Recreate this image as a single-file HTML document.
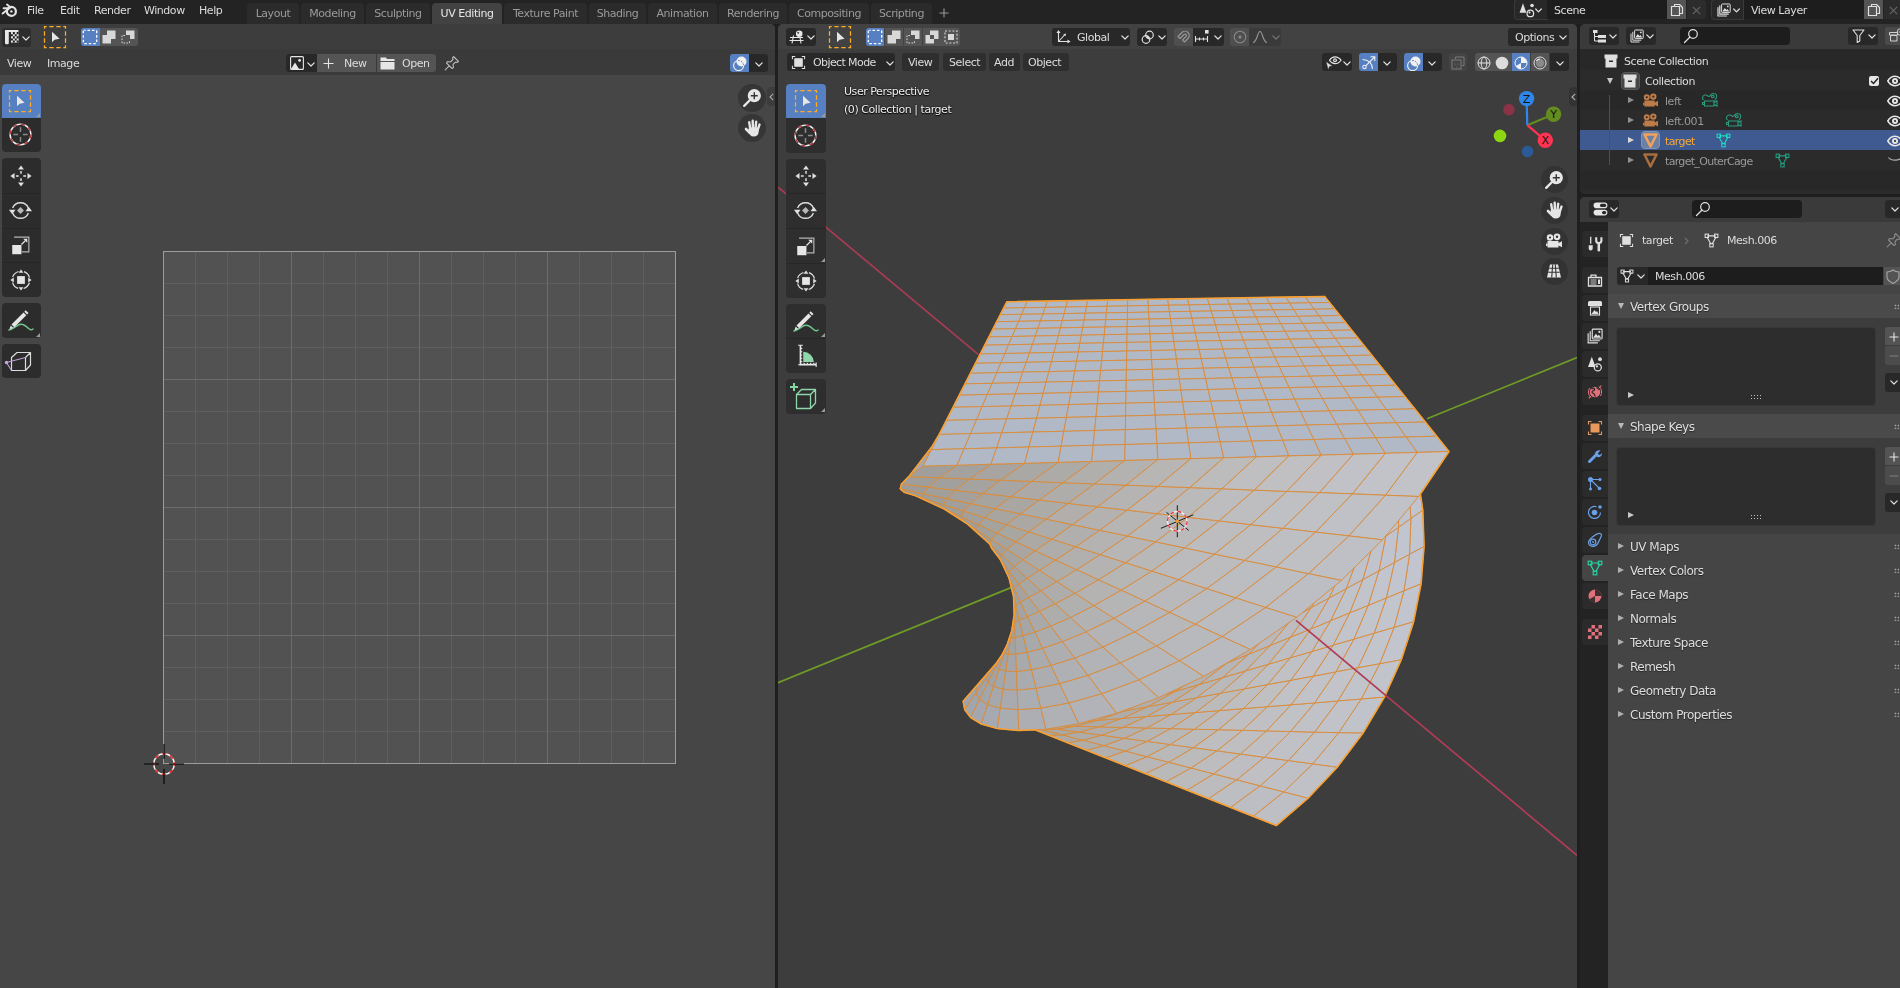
<!DOCTYPE html>
<html lang="en">
<head>
<meta charset="utf-8">
<title>Blender</title>
<style>
*{box-sizing:border-box}
html,body{margin:0;padding:0}
body{width:1900px;height:988px;overflow:hidden;background:#1f1f1f;position:relative;
 font-family:"DejaVu Sans","Liberation Sans",sans-serif;font-size:11px;letter-spacing:-0.45px;color:#dcdcdc;line-height:14px;-webkit-font-smoothing:antialiased}
.a{position:absolute}
.t{position:absolute;white-space:nowrap;line-height:14px;height:14px;will-change:transform;margin-top:1px}
.area{position:absolute;overflow:hidden;border-radius:5px}
.btn{position:absolute;background:#282828;border-radius:3px}
.g{background:#545454}
.b{background:#5680c2}
.k{background:#1d1d1d}
svg{position:absolute;overflow:visible}
.i{fill:none;stroke:#e0e0e0;stroke-width:1.2;stroke-linecap:round;stroke-linejoin:round}
.f{fill:#e0e0e0;stroke:none}
.dd{position:absolute;width:7px;height:5px}
.tab{will-change:transform;position:absolute;top:3px;height:21px;background:#2b2b2b;border-radius:4px 4px 0 0;color:#9a9a9a;text-align:center;line-height:22px}
.tool{position:absolute;width:37px;background:#2c2c2c}
.ph{position:absolute;left:0;right:0;height:24px}
.pt{will-change:transform;margin-top:1px;position:absolute;left:22px;font-size:12px;letter-spacing:-0.5px;color:#dedede;white-space:nowrap;line-height:16px;text-shadow:0 1px 1px rgba(0,0,0,.5)}
.tri{position:absolute;width:0;height:0}
.grip{position:absolute;width:5px;height:5px;background:
 radial-gradient(circle,#a0a0a0 0.8px,transparent 1.1px) 0 0/3px 3px}
</style>
</head>
<body>
<svg width="0" height="0" style="position:absolute"><defs>
<symbol id="chev" viewBox="0 0 8 5"><path d="M.8.8 4 4 7.2.8" fill="none" stroke="#e0e0e0" stroke-width="1.2" stroke-linecap="round" stroke-linejoin="round"/></symbol>
<symbol id="tsel" viewBox="0 0 24 24"><rect x="1.500" y="1.500" width="21" height="21" fill="none" stroke="#ffad24" stroke-width="1.250" stroke-dasharray="4.300 2.700" stroke-dashoffset="2.150"/><path d="M9 6.800V17.200L11.600 14.700 16.600 13.800z" fill="#e6e6e6"/></symbol>
<symbol id="tcur" viewBox="0 0 26 26"><circle cx="13" cy="13" r="10.8" fill="none" stroke="#f0f0f0" stroke-width="1.5"/><circle cx="13" cy="13" r="10.8" fill="none" stroke="#b4383f" stroke-width="1.5" stroke-dasharray="4.24 4.24"/><path d="M13 5.5v5M13 15.5v5M5.5 13h5M15.5 13h5" stroke="#8a8a8a" stroke-width="1.6" fill="none"/></symbol>
<symbol id="tmove" viewBox="0 0 26 26"><path d="M13 1.5 16.2 6h-6.4zM13 24.5 16.2 20h-6.4zM1.5 13 6 9.8v6.4zM24.5 13 20 9.8v6.4z" fill="#e0e0e0"/><path d="M13 7.5v3M13 15.5v3M7.500 13h3M15.5 13h3" stroke="#e0e0e0" stroke-width="1.6" fill="none"/></symbol>
<symbol id="trot" viewBox="0 0 26 26"><path d="M4.800 10.500A8.800 8.800 0 0 1 21.2 10.500M21.200 15.500A8.800 8.800 0 0 1 4.800 15.500" fill="none" stroke="#e0e0e0" stroke-width="1.4"/><path d="M1 12.200h6.800L4.400 16.800zM18.200 13.800H25L21.600 9.200z" fill="#e0e0e0"/><path d="M13 9.400 16.600 13 13 16.600 9.400 13z" fill="#b8b8b8"/></symbol>
<symbol id="tscl" viewBox="0 0 26 26"><path d="M5.500 4.500H21.500V20.500H14" fill="none" stroke="#b4b4b4" stroke-width="1.3"/><rect x="3.5" y="13" width="10" height="10" fill="#e6e6e6"/><path d="M13.500 12.500 18 8" stroke="#e6e6e6" stroke-width="1.4"/><path d="M19.800 6.200v4.400l-4.400-4.400z" fill="#e6e6e6"/></symbol>
<symbol id="ttrf" viewBox="0 0 26 26"><circle cx="13" cy="13" r="9.600" fill="none" stroke="#e0e0e0" stroke-width="1.300" stroke-dasharray="9 6.080" stroke-dashoffset="-3.040"/><rect x="8.800" y="8.800" width="8.400" height="8.400" fill="#e6e6e6"/><path d="M13 1.500 15.600 5.200h-5.200zM13 24.500 15.600 20.800h-5.200zM1.500 13 5.200 10.400v5.200zM24.500 13 20.800 10.400v5.200z" fill="#e0e0e0"/></symbol>
<symbol id="tann" viewBox="0 0 30 26"><path d="M3 22c4-1 7-4 10.500-5.500s6 1 8.500 3.500 4 2 5 1" fill="none" stroke="#72c78e" stroke-width="1.5" stroke-linecap="round"/><path d="M5.500 16.500 17.500 4.500 20.300 7.300 8.300 19.300z" fill="#e6e6e6"/><path d="M18.300 3.700 19.700 2.300 22.500 5.100 21.100 6.500z" fill="#e6e6e6"/><path d="M3.500 21.300 4.700 17.500 7.300 20.100z" fill="#e6e6e6"/></symbol>
<symbol id="trip" viewBox="0 0 30 26"><path d="M7.500 9.500 13 4.500H26.500V17L21.500 22.500H7.500zM21.500 9.500V22.500M21.500 9.500 26.500 4.500" fill="none" stroke="#dcdcdc" stroke-width="1.2" stroke-linejoin="round"/><path d="M2.500 14.500 21.500 9.500M2.500 14.500 7.500 22.500" fill="none" stroke="#bf9fd8" stroke-width="1.100"/><circle cx="2.500" cy="14.500" r="1.700" fill="#c9a4e8"/></symbol>
<symbol id="tmeas" viewBox="0 0 26 26"><path d="M7 2.500V23.500H24" fill="none" stroke="#e6e6e6" stroke-width="1.800"/><path d="M4.500 2.500H9.500M4.500 23.500H7M7 6h2M7 9.500h2M7 13h2M7 16.500h2M7 20h2M11 23.500v-2M14.500 23.500v-2M18 23.500v-2M21.500 23.500v-2M24 21v5" stroke="#e6e6e6" stroke-width="1.200" fill="none"/><path d="M10 20.500V9.500A11.500 11.500 0 0 1 21.500 20.500z" fill="#8fd6aa"/></symbol>
<symbol id="tadd" viewBox="0 0 30 30"><path d="M7.500 12.500 12.500 7.500H26.500V21L21.500 26.500H7.500zM7.500 12.500H21.500V26.500M21.500 12.500 26.500 7.500" fill="none" stroke="#8fd6aa" stroke-width="1.300" stroke-linejoin="round"/><path d="M5 1v8M1 5h8" stroke="#7ed99f" stroke-width="2" fill="none"/></symbol>
<symbol id="corner" viewBox="0 0 4 4"><path d="M4 0V4H0z" fill="#9a9a9a"/></symbol>
<symbol id="gzoom" viewBox="0 0 20 20"><circle cx="12.300" cy="7.700" r="6.600" fill="#e6e6e6"/><path d="M7.500 12.500 2.200 17.800" stroke="#e6e6e6" stroke-width="2.400" stroke-linecap="round"/><path d="M12.300 4.200v7M8.800 7.700h7" stroke="#333" stroke-width="1.400"/></symbol>
<symbol id="ghand" viewBox="0 0 20 20"><g stroke="#e6e6e6" stroke-width="2.400" stroke-linecap="round" fill="none"><path d="M7.300 11 6.200 4.200M9.900 10.500 9.700 2.600M12.400 10.800 13.200 3.600M14.600 12 16.500 6.600"/><path d="M6.500 14.500 3 11" stroke-width="2.600"/></g><path d="M6 9.500H15.700V13.500C15.700 16.800 13.700 18.600 10.700 18.600 7.800 18.600 6 16.300 5 13.500z" fill="#e6e6e6"/></symbol>
<symbol id="imesh" viewBox="0 0 16 16"><path d="M3.500 3h9M3 4 7.500 12M13 4 8.500 12" fill="none" stroke-width="1.200"/><rect x="1.200" y="1.200" width="3.600" height="3.600" fill="none" stroke-width="1.100"/><rect x="11.200" y="1.200" width="3.600" height="3.600" fill="none" stroke-width="1.100"/><rect x="6.200" y="11.200" width="3.600" height="3.600" fill="none" stroke-width="1.100"/></symbol>
<symbol id="icam" viewBox="0 0 18 16"><path fill-rule="evenodd" d="M5 1.300a3.200 3.200 0 1 0 0 6.400 3.200 3.200 0 1 0 0-6.400zM5 3.400a1.100 1.100 0 1 1 0 2.200 1.100 1.100 0 1 1 0-2.200zM12 .400a3.400 3.400 0 1 0 0 6.800 3.400 3.400 0 1 0 0-6.800zM12 2.600a1.200 1.200 0 1 1 0 2.400 1.200 1.200 0 1 1 0-2.400z"/><path d="M2.500 8h11v6.500h-11zM13.500 10 17 8.300v6l-3.500-1.800z"/><path d="M1 10.500h1.500v2.500H1z"/></symbol>
<symbol id="ieye" viewBox="0 0 16 12"><path d="M.800 6C3 2.400 5.500 1.300 8 1.300S13 2.400 15.200 6C13 9.600 10.500 10.700 8 10.700S3 9.600.800 6z" fill="none" stroke="#e6e6e6" stroke-width="1.500"/><circle cx="8" cy="6" r="3" fill="#e6e6e6"/><circle cx="8" cy="6" r="1.100" fill="#2b2b2b"/></symbol>
<symbol id="ibox" viewBox="0 0 16 16"><path d="M1.500 1.500h13v4h-13zM2.500 5.500h11v9h-11z" fill="#e0e0e0"/><path d="M6 8.200h4" stroke="#2a2a2a" stroke-width="1.400"/></symbol>
<symbol id="iobj" viewBox="0 0 16 16"><rect x="4" y="4" width="8" height="8"/><path d="M1.500 4.500v-3h3M11.500 1.500h3v3M14.500 11.500v3h-3M4.500 14.500h-3v-3" fill="none" stroke-width="1.100"/></symbol>
<symbol id="ipin" viewBox="0 0 16 16"><path d="M9.500 1.500 14.500 6.500 13 7.500 11.500 7 9 9.500 9.500 12.500 8 13.500 2.500 8 3.500 6.500 6.500 7 9 4.500 8.500 3zM5.200 10.800 1.200 14.800" fill="none" stroke-width="1.100" stroke-linejoin="round" stroke-linecap="round"/></symbol>
<symbol id="isearch" viewBox="0 0 16 16"><circle cx="10" cy="6" r="4.300" fill="none" stroke="#e0e0e0" stroke-width="1.200"/><path d="M7 9 1.500 14.500" stroke="#e0e0e0" stroke-width="1.300" stroke-linecap="round"/></symbol>
<symbol id="iimgs" viewBox="0 0 14 14"><path d="M1 4.500V13H9.500M2.800 2.800V11.200H11.200" fill="none" stroke="#e0e0e0" stroke-width="1"/><rect x="4.600" y="1" width="8.600" height="8.600" rx=".8" fill="none" stroke="#e0e0e0" stroke-width="1"/><path d="M5.300 8.600 7.800 5 9.400 7 10.400 6 12.400 8.600z" fill="#e0e0e0"/><circle cx="10.800" cy="3.400" r=".9" fill="#e0e0e0"/></symbol>
<symbol id="iover" viewBox="0 0 16 16"><circle cx="9.500" cy="6.500" r="5" fill="#f0f0f0"/><path d="M6 5.600A5 5 0 1 0 11.600 11" fill="none" stroke="#f0f0f0" stroke-width="1.200"/><path d="M6 5.600A5 5 0 0 1 11.600 11" fill="none" stroke="#5680c2" stroke-width="1" stroke-dasharray="1.800 1.200"/></symbol>
</defs></svg>
<!-- TOP BAR -->
<div class="a" style="left:0;top:0;width:1900px;height:24px;background:#232323"></div>
<svg style="left:1px;top:3px" width="17" height="15" viewBox="0 0 17 15"><g fill="none" stroke="#e4e4e4" stroke-linecap="round"><circle cx="10.4" cy="8.4" r="4.5" stroke-width="2.2"/><path d="M1.6 10.6 8 5.4M2.6 5.2H8.4M6 1.6 9.6 4.4" stroke-width="1.9"/></g><circle cx="10.4" cy="8.4" r="1.2" fill="#e4e4e4"/></svg>
<div class="t" style="left:27px;top:3px">File</div>
<div class="t" style="left:60px;top:3px">Edit</div>
<div class="t" style="left:94px;top:3px">Render</div>
<div class="t" style="left:144px;top:3px">Window</div>
<div class="t" style="left:199px;top:3px">Help</div>
<div class="tab" style="left:247px;width:52px">Layout</div>
<div class="tab" style="left:301px;width:63px">Modeling</div>
<div class="tab" style="left:366px;width:64px">Sculpting</div>
<div class="tab" style="left:432px;width:70px;background:#424242;color:#e6e6e6">UV Editing</div>
<div class="tab" style="left:504px;width:83px">Texture Paint</div>
<div class="tab" style="left:589px;width:57px">Shading</div>
<div class="tab" style="left:648px;width:69px">Animation</div>
<div class="tab" style="left:719px;width:68px">Rendering</div>
<div class="tab" style="left:789px;width:80px">Compositing</div>
<div class="tab" style="left:871px;width:61px">Scripting</div>
<svg style="left:939px;top:8px" width="10" height="10" viewBox="0 0 10 10"><path d="M5 .5v9M.5 5h9" stroke="#9a9a9a" stroke-width="1.1" fill="none"/></svg>
<!-- scene selector -->
<div class="btn" style="left:1515px;top:0;width:32px;height:19px;border-radius:3px 0 0 3px;box-shadow:0 0 0 1px #3a3a3a"></div>
<div class="btn k" style="left:1547px;top:0;width:120px;height:19px;border-radius:0"></div>
<div class="btn g" style="left:1667px;top:0;width:19px;height:19px;border-radius:0"></div>
<div class="btn" style="left:1687px;top:0;width:19px;height:19px;border-radius:0 3px 3px 0;background:#2c2c2c"></div>
<svg style="left:1518.500px;top:2px" width="17" height="16" viewBox="0 0 15 14"><path class="f" d="M3.5 1 6.5 9.5H.5z"/><circle class="f" cx="11.5" cy="3" r="1.6"/><circle cx="10" cy="10" r="2.9" fill="none" stroke="#e0e0e0" stroke-width="1.1"/><circle class="f" cx="9.3" cy="9.2" r=".9"/></svg>
<svg class="dd" style="left:1535px;top:8px" viewBox="0 0 7 5"><path class="i" d="M.7 1 3.5 3.8 6.3 1"/></svg>
<div class="t" style="left:1554px;top:3px">Scene</div>
<svg style="left:1670px;top:3px" width="14" height="14" viewBox="0 0 14 14"><path class="i" d="M4.5 3.5V1.5H9.5L12.5 4.5V10.5H9.5M1.5 3.5H9.5V12.5H1.5z" stroke-width="1.1"/></svg>
<svg style="left:1692px;top:6px" width="9" height="9" viewBox="0 0 9 9"><path d="M.8.8 8.2 8.2M8.2.8.8 8.2" stroke="#666" stroke-width="1.1" fill="none"/></svg>
<!-- view layer selector -->
<div class="btn" style="left:1712px;top:0;width:31px;height:19px;border-radius:3px 0 0 3px;box-shadow:0 0 0 1px #3a3a3a"></div>
<div class="btn k" style="left:1744px;top:0;width:120px;height:19px;border-radius:0"></div>
<div class="btn g" style="left:1864px;top:0;width:19px;height:19px;border-radius:0"></div>
<div class="btn" style="left:1884px;top:0;width:19px;height:19px;border-radius:0;background:#2c2c2c"></div>
<svg style="left:1717px;top:3px" width="14" height="14" viewBox="0 0 14 14"><path class="i" d="M1 4.5V13H9.5M2.8 2.8V11.2H11.2" stroke-width="1"/><rect x="4.6" y="1" width="8.6" height="8.6" rx=".8" fill="none" stroke="#e0e0e0" stroke-width="1"/><path class="f" d="M5.3 8.6 7.8 5 9.4 7 10.4 6 12.4 8.6z"/><circle class="f" cx="10.8" cy="3.4" r=".9"/></svg>
<svg class="dd" style="left:1733px;top:8px" viewBox="0 0 7 5"><path class="i" d="M.7 1 3.5 3.8 6.3 1"/></svg>
<div class="t" style="left:1751px;top:3px">View Layer</div>
<svg style="left:1867px;top:3px" width="14" height="14" viewBox="0 0 14 14"><path class="i" d="M4.5 3.5V1.5H9.5L12.5 4.5V10.5H9.5M1.5 3.5H9.5V12.5H1.5z" stroke-width="1.1"/></svg>
<svg style="left:1889px;top:6px" width="9" height="9" viewBox="0 0 9 9"><path d="M.8.8 8.2 8.2M8.2.8.8 8.2" stroke="#666" stroke-width="1.1" fill="none"/></svg>
<!-- UV EDITOR -->
<div class="area" style="left:0;top:24px;width:775px;height:964px;background:#464646;border-radius:0 5px 0 0">
 <div class="a" style="left:0;top:0;width:775px;height:25px;background:#3d3d3d"></div>
 <div class="a" style="left:0;top:25px;width:775px;height:26px;background:#3a3a3a"></div>
 <!-- uv square -->
 <div class="a" style="left:163px;top:227px;width:513px;height:513px;border:1px solid #9c9c9c;background-color:#525252;
  background-image:linear-gradient(90deg,#6c6c6c 1px,transparent 1px),linear-gradient(#6c6c6c 1px,transparent 1px),linear-gradient(90deg,#5f5f5f 1px,transparent 1px),linear-gradient(#5f5f5f 1px,transparent 1px);
  background-size:128px 128px,128px 128px,32px 32px,32px 32px;background-position:-1px -1px"></div>
 <!-- 2d cursor -->
 <svg style="left:140px;top:716px" width="48" height="48" viewBox="-24 -24 48 48"><circle r="10.300" fill="none" stroke="#f4f4f4" stroke-width="1.400"/><circle r="10.300" fill="none" stroke="#f02020" stroke-width="1.400" stroke-dasharray="4.045 4.045" stroke-dashoffset="2"/><path d="M-20 0h15M5 0h15M0-20v15M0 5v15" stroke="#000" stroke-width="1.100" fill="none"/></svg>
 <!-- header row 1 -->
 <div class="btn" style="left:2px;top:4px;width:29px;height:19px;background:#2d2d2d"></div>
 <svg style="left:5px;top:5.700px" width="15" height="15" viewBox="0 0 15 15"><rect x="0" y="0" width="3.800" height="14.300" rx="1.200" fill="#e8e8e8"/><rect x="0" y="0" width="13.600" height="2.100" rx=".8" fill="#e8e8e8"/><rect x="6" y="2.100" width="7.600" height="10.500" fill="#e8e8e8"/><path d="M7.9 2.1h1.9v2.1h-1.9zM11.7 2.1h1.9v2.1h-1.9zM6 4.2h1.9v2.1h-1.9zM9.8 4.2h1.9v2.1h-1.9zM7.9 6.3h1.9v2.1h-1.9zM11.7 6.3h1.9v2.1h-1.9zM6 8.4h1.9v2.1h-1.9zM9.8 8.4h1.9v2.1h-1.9zM7.9 10.5h1.9v2.1h-1.9zM11.7 10.5h1.9v2.1h-1.9z" fill="#1c1c1c"/></svg>
 <svg style="left:21.500px;top:11.500px" width="8" height="5"><use href="#chev"/></svg>
 <svg style="left:43px;top:1px" width="24" height="24"><use href="#tsel"/></svg>
 <div class="btn b" style="left:81px;top:4px;width:18.500px;height:18px;border-radius:3px 0 0 3px"></div>
 <div class="btn g" style="left:100px;top:4px;width:18.500px;height:18px;border-radius:0"></div>
 <div class="btn g" style="left:119px;top:4px;width:18.500px;height:18px;border-radius:0 3px 3px 0"></div>
 <svg style="left:82px;top:5px" width="16" height="16" viewBox="0 0 16 16"><rect x="1.300" y="1.300" width="13.400" height="13.400" rx="1" fill="none" stroke="#fff" stroke-width="1.300" stroke-dasharray="2.600 1.867" stroke-dashoffset="1.300"/></svg>
 <svg style="left:102px;top:6px" width="14" height="14" viewBox="0 0 14 14"><path d="M5 .500h8.500V9H9v4.500H.500V5H5z" fill="#d8d8d8"/></svg>
 <svg style="left:121px;top:6px" width="14" height="14" viewBox="0 0 14 14"><path d="M5 .500h8.500V9H9V5H5z" fill="#d8d8d8"/><path d="M4 5.500H1V13h7.500v-3" fill="none" stroke="#d8d8d8" stroke-width="1" stroke-dasharray="1.600 1.400"/></svg>
 <!-- header row 2 -->
 <div class="t" style="left:7px;top:32px">View</div>
 <div class="t" style="left:47px;top:32px">Image</div>
 <div class="btn" style="left:286px;top:30px;width:31px;height:18px;border-radius:3px 0 0 3px"></div>
 <div class="btn g" style="left:317px;top:30px;width:59px;height:18px;border-radius:0"></div>
 <div class="btn g" style="left:377px;top:30px;width:59px;height:18px;border-radius:0 3px 3px 0"></div>
 <svg style="left:290px;top:32px" width="14" height="14" viewBox="0 0 14 14"><rect x=".600" y=".600" width="12.800" height="12.800" rx="1" fill="none" stroke="#e6e6e6" stroke-width="1.100"/><path d="M1 13 5 6.500 9 13z" fill="#e6e6e6"/><circle cx="9.600" cy="4.400" r="1.400" fill="#e6e6e6"/></svg>
 <svg style="left:306.500px;top:37.500px" width="8" height="5"><use href="#chev"/></svg>
 <svg style="left:323px;top:34px" width="11" height="11" viewBox="0 0 11 11"><path d="M5.500.500v10M.500 5.500h10" stroke="#e6e6e6" stroke-width="1.100" fill="none"/></svg>
 <div class="t" style="left:344px;top:32px">New</div>
 <svg style="left:380px;top:32px" width="15" height="14" viewBox="0 0 15 14"><path d="M.500 1.500h5.500l1 1.500H14.500v2H.500zM.500 6h14v7.500h-14z" fill="#e6e6e6"/></svg>
 <div class="t" style="left:402px;top:32px">Open</div>
 <svg style="left:444px;top:31px" width="16" height="16" stroke="#b8b8b8"><use href="#ipin"/></svg>
 <div class="btn b" style="left:730px;top:30px;width:18.500px;height:18px;border-radius:3px 0 0 3px"></div>
 <div class="btn" style="left:749px;top:30px;width:19px;height:18px;border-radius:0 3px 3px 0"></div>
 <svg style="left:731.500px;top:31px" width="16" height="16"><use href="#iover"/></svg>
 <svg style="left:754.500px;top:37.500px" width="8" height="5"><use href="#chev"/></svg>
 <!-- toolbar -->
 <div class="tool b" style="left:2px;top:60px;width:39px;height:33.500px;border-radius:4px 4px 0 0;background:#5680c2"></div>
 <div class="tool" style="left:2px;top:93.500px;width:39px;height:34.500px;border-radius:0 0 4px 4px"></div>
 <div class="tool" style="left:2px;top:134px;width:39px;height:139px;border-radius:4px;background-image:linear-gradient(#262626,#262626),linear-gradient(#262626,#262626),linear-gradient(#262626,#262626);background-size:100% 1px;background-repeat:no-repeat;background-position:0 34.500px,0 69.500px,0 104px"></div>
 <div class="tool" style="left:2px;top:279px;width:39px;height:34.500px;border-radius:4px"></div>
 <div class="tool" style="left:2px;top:320px;width:39px;height:33.500px;border-radius:4px"></div>
 <svg style="left:8px;top:64.800px" width="24" height="24"><use href="#tsel"/></svg>
 <svg style="left:36px;top:88.500px" width="4" height="4"><use href="#corner"/></svg>
 <svg style="left:8px;top:98px" width="25" height="25"><use href="#tcur"/></svg>
 <svg style="left:8.500px;top:139.500px" width="24" height="24"><use href="#tmove"/></svg>
 <svg style="left:8px;top:173.500px" width="25" height="25"><use href="#trot"/></svg>
 <svg style="left:8.500px;top:209px" width="24" height="24"><use href="#tscl"/></svg>
 <svg style="left:8.500px;top:244px" width="24" height="24"><use href="#ttrf"/></svg>
 <svg style="left:6px;top:284px" width="30" height="26"><use href="#tann"/></svg>
 <svg style="left:36px;top:308.500px" width="4" height="4"><use href="#corner"/></svg>
 <svg style="left:4px;top:324px" width="30" height="26"><use href="#trip"/></svg>
 <!-- nav gizmos -->
 <div class="a" style="left:738px;top:59.500px;width:28px;height:28px;border-radius:14px;background:#363636"></div>
 <div class="a" style="left:738px;top:89.500px;width:28px;height:28px;border-radius:14px;background:#363636"></div>
 <svg style="left:742px;top:63.500px" width="20" height="20"><use href="#gzoom"/></svg>
 <svg style="left:742.500px;top:93.500px" width="20" height="20"><use href="#ghand"/></svg>
 <div class="a" style="left:767px;top:63px;width:8px;height:19px;border-radius:4px 0 0 4px;background:#3c3c3c"></div>
 <svg style="left:768.500px;top:68.500px" width="5" height="8" viewBox="0 0 5 8"><path d="M4.200.800 1 4 4.200 7.200" fill="none" stroke="#a8a8a8" stroke-width="1.100"/></svg>
</div>
<!-- 3D VIEWPORT -->
<div class="area" style="left:778px;top:24px;width:799px;height:964px;background:#3d3d3d;border-radius:5px 5px 0 0">
 <svg style="left:0;top:0" width="799" height="964" viewBox="778 24 799 964">
  <path d="M778 187.2 978.500 354.700" stroke="#a83c54" stroke-width="1.700" fill="none"/>
  <path d="M778 682.700 1014 586.400M1427 418.700 1577 357.500" stroke="#6f9c27" stroke-width="1.700" fill="none"/>
<path d="M1006.9 301.7L939.2 434.4L932.2 446.2L908.7 476.6L901.4 484L900.2 488.9L904 492.2L915.7 495.9L944.2 509L967.6 524.1L989.9 544.3L991.5 548L1000.2 559.5L1009 578L1013.5 596.6L1014.2 614.3L1011.8 630.4L1007.3 644.1L1001.9 655L996.6 662.7L963.1 701.2L964.7 709.7L970.6 717.5L981.3 724L997.3 728.6L1018.8 730.6L1034.9 729.8L1276.3 825.6L1308.1 798.2L1337.3 767.2L1362.9 733.3L1384.4 697.2L1401.3 659.8L1413.6 621.9L1421.1 583.9L1424.1 546.5L1422.8 510.2L1420.4 494L1449 451.5L1324.7 296.4L1006.9 301.7Z" fill="#b8b9bd"/>
<g stroke="#d98c3c" stroke-width="0.95" stroke-linejoin="round">
<path d="M1292.2 491.4L1296.2 500.3L1278.7 478.8L1273.1 470.5Z" fill="#b1b8c9"/>
<path d="M1309.9 513.7L1312.2 523.2L1296.2 500.3L1292.2 491.4Z" fill="#b4baca"/>
<path d="M1273.1 470.5L1278.7 478.8L1259.9 458.5L1252.7 450.9Z" fill="#aeb6c7"/>
<path d="M1326 537.5L1326.5 547.4L1312.2 523.2L1309.9 513.7Z" fill="#b6bdcc"/>
<path d="M1252.7 450.9L1259.9 458.5L1239.9 439.5L1231.3 432.6Z" fill="#acb3c5"/>
<path d="M1340.3 562.8L1338.9 573L1326.5 547.4L1326 537.5Z" fill="#b9bfcd"/>
<path d="M1352.6 589.6L1349.2 600L1338.9 573L1340.3 562.8Z" fill="#bbc0ce"/>
<path d="M1296.2 500.3L1300.3 509.6L1284.5 487.4L1278.7 478.8Z" fill="#b0b7c8"/>
<path d="M1278.7 478.8L1284.5 487.4L1267.3 466.4L1259.9 458.5Z" fill="#adb5c6"/>
<path d="M1312.2 523.2L1314.6 533L1300.3 509.6L1296.2 500.3Z" fill="#b3baca"/>
<path d="M1326.5 547.4L1327 557.7L1314.6 533L1312.2 523.2Z" fill="#b6bccb"/>
<path d="M1338.9 573L1337.5 583.7L1327 557.7L1326.5 547.4Z" fill="#b8becd"/>
<path d="M1349.2 600L1345.7 610.9L1337.5 583.7L1338.9 573Z" fill="#bac0ce"/>
<path d="M1300.3 509.6L1304.7 519.3L1290.6 496.4L1284.5 487.4Z" fill="#afb6c6"/>
<path d="M1314.6 533L1317 543.3L1304.7 519.3L1300.3 509.6Z" fill="#b2b9c8"/>
<path d="M1327 557.7L1327.5 568.5L1317 543.3L1314.6 533Z" fill="#b5bbca"/>
<path d="M1337.5 583.7L1335.9 594.8L1327.5 568.5L1327 557.7Z" fill="#b7bdcc"/>
<path d="M1345.7 610.9L1342.1 622.1L1335.9 594.8L1337.5 583.7Z" fill="#babfcd"/>
<path d="M1304.7 519.3L1309.2 529.4L1296.9 505.7L1290.6 496.4Z" fill="#adb4c5"/>
<path d="M1317 543.3L1319.6 554.1L1309.2 529.4L1304.7 519.3Z" fill="#b0b7c7"/>
<path d="M1327.5 568.5L1328.1 579.8L1319.6 554.1L1317 543.3Z" fill="#b3bac9"/>
<path d="M1335.9 594.8L1334.4 606.4L1328.1 579.8L1327.5 568.5Z" fill="#b6bcca"/>
<path d="M1342.1 622.1L1338.2 633.9L1334.4 606.4L1335.9 594.8Z" fill="#b9becb"/>
<path d="M1319.6 554.1L1322.3 565.3L1313.9 539.9L1309.2 529.4Z" fill="#afb5c5"/>
<path d="M1328.1 579.8L1328.7 591.5L1322.3 565.3L1319.6 554.1Z" fill="#b2b8c6"/>
<path d="M1334.4 606.4L1332.7 618.5L1328.7 591.5L1328.1 579.8Z" fill="#b5bac8"/>
<path d="M1338.2 633.9L1334.3 646.1L1332.7 618.5L1334.4 606.4Z" fill="#b8bdc9"/>
<path d="M1328.7 591.5L1329.3 603.8L1325.2 577L1322.3 565.3Z" fill="#b0b6c4"/>
<path d="M1332.7 618.5L1331 631.2L1329.3 603.8L1328.7 591.5Z" fill="#b3b8c6"/>
<path d="M1334.3 646.1L1330.2 658.9L1331 631.2L1332.7 618.5Z" fill="#b6bbc7"/>
<path d="M1331 631.2L1329.2 644.4L1329.9 616.7L1329.3 603.8Z" fill="#b1b6c2"/>
<path d="M1330.2 658.9L1325.8 672.3L1329.2 644.4L1331 631.2Z" fill="#b4b8c4"/>
<path d="M999.7 659.3L988 672.7L986.4 677.9L996.4 663.1Z" fill="#9b9fa6"/>
<path d="M1309.6 302.8L1329.5 302.5L1324.7 296.4L1305.2 296.8Z" fill="#b2b9c6"/>
<path d="M1348.7 329.4L1345.8 322.6L1324.7 296.4L1329.5 302.5Z" fill="#b4bbcb"/>
<path d="M1325.8 672.3L1321.3 686.2L1327.3 658.3L1329.2 644.4Z" fill="#b1b5c0"/>
<path d="M1289.6 303.2L1309.6 302.8L1305.2 296.8L1285.7 297.1Z" fill="#b2b9c6"/>
<path d="M988 672.7L975.9 686.6L975.8 693.4L986.4 677.9Z" fill="#9da2a9"/>
<path d="M1269.5 303.5L1289.6 303.2L1285.7 297.1L1266.2 297.4Z" fill="#b2b9c6"/>
<path d="M1365.8 357.5L1365.1 350.1L1345.8 322.6L1348.7 329.4Z" fill="#b7bdcc"/>
<path d="M1003.7 308.1L1024.5 307.7L1027.2 301.4L1006.9 301.8Z" fill="#b2b9c6"/>
<path d="M1249.4 303.9L1269.5 303.5L1266.2 297.4L1246.5 297.8Z" fill="#b2b9c6"/>
<path d="M1024.5 307.7L1045.2 307.4L1047.4 301.1L1027.2 301.4Z" fill="#b2b9c6"/>
<path d="M1229.3 304.2L1249.4 303.9L1246.5 297.8L1226.9 298.1Z" fill="#b2b9c6"/>
<path d="M975.9 686.6L963.1 701.2L964.7 709.7L975.8 693.4Z" fill="#9fa4ac"/>
<path d="M1006 649L996.4 663.1L996.1 666.6L1003.7 651.4Z" fill="#9b9ea3"/>
<path d="M1045.2 307.4L1065.9 307L1067.6 300.7L1047.4 301.1Z" fill="#b2b9c6"/>
<path d="M1209.1 304.5L1229.3 304.2L1226.9 298.1L1207.2 298.4Z" fill="#b2b9c6"/>
<path d="M1314.2 309.2L1334.6 308.8L1329.5 302.5L1309.6 302.8Z" fill="#b2b9c6"/>
<path d="M1065.9 307L1086.5 306.6L1087.7 300.4L1067.6 300.7Z" fill="#b2b9c6"/>
<path d="M1188.8 304.9L1209.1 304.5L1207.2 298.4L1187.4 298.7Z" fill="#b2b9c6"/>
<path d="M1351.6 336.5L1348.7 329.4L1329.5 302.5L1334.6 308.8Z" fill="#b4baca"/>
<path d="M1086.5 306.6L1107.1 306.3L1107.7 300.1L1087.7 300.4Z" fill="#b2b9c6"/>
<path d="M1168.4 305.2L1188.8 304.9L1187.4 298.7L1167.5 299.1Z" fill="#b2b9c6"/>
<path d="M1380.6 387L1382.3 379L1365.1 350.1L1365.8 357.5Z" fill="#b9bfce"/>
<path d="M1107.1 306.3L1127.6 305.9L1127.7 299.7L1107.7 300.1Z" fill="#b2b9c6"/>
<path d="M1148.1 305.6L1168.4 305.2L1167.5 299.1L1147.7 299.4Z" fill="#b2b9c6"/>
<path d="M1127.6 305.9L1148.1 305.6L1147.7 299.4L1127.7 299.7Z" fill="#b2b9c6"/>
<path d="M1293.7 309.6L1314.2 309.2L1309.6 302.8L1289.6 303.2Z" fill="#b2b9c6"/>
<path d="M1273.1 309.9L1293.7 309.6L1289.6 303.2L1269.5 303.5Z" fill="#b2b9c6"/>
<path d="M996.4 663.1L986.4 677.9L988 682.7L996.1 666.6Z" fill="#9da1a7"/>
<path d="M1366.5 365.3L1365.8 357.5L1348.7 329.4L1351.6 336.5Z" fill="#b6bdcc"/>
<path d="M1000.3 314.7L1021.7 314.3L1024.5 307.7L1003.7 308.1Z" fill="#b2b9c6"/>
<path d="M1252.5 310.3L1273.1 309.9L1269.5 303.5L1249.4 303.9Z" fill="#b2b9c6"/>
<path d="M1392.9 417.8L1396.9 409.5L1382.3 379L1380.6 387Z" fill="#bbc1cf"/>
<path d="M1021.7 314.3L1042.9 314L1045.2 307.4L1024.5 307.7Z" fill="#b2b9c6"/>
<path d="M1231.8 310.6L1252.5 310.3L1249.4 303.9L1229.3 304.2Z" fill="#b2b9c6"/>
<path d="M1011 636.9L1003.7 651.4L1004.4 653.3L1009.4 637.9Z" fill="#9b9ea1"/>
<path d="M1042.9 314L1064.2 313.6L1065.9 307L1045.2 307.4Z" fill="#b2b9c6"/>
<path d="M1319 315.9L1340 315.5L1334.6 308.8L1314.2 309.2Z" fill="#b2b9c6"/>
<path d="M1211.1 311L1231.8 310.6L1229.3 304.2L1209.1 304.5Z" fill="#b2b9c6"/>
<path d="M1064.2 313.6L1085.3 313.2L1086.5 306.6L1065.9 307Z" fill="#b2b9c6"/>
<path d="M1190.3 311.4L1211.1 311L1209.1 304.5L1188.8 304.9Z" fill="#b2b9c6"/>
<path d="M986.4 677.9L975.8 693.4L979.6 699.6L988 682.7Z" fill="#9fa3aa"/>
<path d="M1379 395.3L1380.6 387L1365.8 357.5L1366.5 365.3Z" fill="#b9bfcd"/>
<path d="M1085.3 313.2L1106.4 312.8L1107.1 306.3L1086.5 306.6Z" fill="#b2b9c6"/>
<path d="M1169.4 311.7L1190.3 311.4L1188.8 304.9L1168.4 305.2Z" fill="#b2b9c6"/>
<path d="M1106.4 312.8L1127.5 312.5L1127.6 305.9L1107.1 306.3Z" fill="#b2b9c6"/>
<path d="M1148.5 312.1L1169.4 311.7L1168.4 305.2L1148.1 305.6Z" fill="#b2b9c6"/>
<path d="M1127.5 312.5L1148.5 312.1L1148.1 305.6L1127.6 305.9Z" fill="#b2b9c6"/>
<path d="M1298 316.3L1319 315.9L1314.2 309.2L1293.7 309.6Z" fill="#b2b9c6"/>
<path d="M1402.3 450.1L1408.8 441.5L1396.9 409.5L1392.9 417.8Z" fill="#bdc2cf"/>
<path d="M1276.8 316.7L1298 316.3L1293.7 309.6L1273.1 309.9Z" fill="#b2b9c6"/>
<path d="M1003.7 651.4L996.1 666.6L999.1 669.5L1004.4 653.3Z" fill="#9ea1a5"/>
<path d="M1367.3 373.5L1366.5 365.3L1351.6 336.5L1354.8 343.9Z" fill="#b6bccb"/>
<path d="M996.7 321.7L1018.7 321.3L1021.7 314.3L1000.3 314.7Z" fill="#b2b9c6"/>
<path d="M1255.7 317L1276.8 316.7L1273.1 309.9L1252.5 310.3Z" fill="#b2b9c6"/>
<path d="M975.8 693.4L964.7 709.7L970.6 717.4L979.6 699.6Z" fill="#a1a6ad"/>
<path d="M1388.7 426.6L1392.9 417.8L1380.6 387L1379 395.3Z" fill="#bbc0ce"/>
<path d="M1014.2 623.3L1009.4 637.9L1010.7 638.3L1013 623.1Z" fill="#9b9d9f"/>
<path d="M1018.7 321.3L1040.5 320.9L1042.9 314L1021.7 314.3Z" fill="#b2b9c6"/>
<path d="M1013.9 721.4L1031.5 728.4L1042.6 729.8L1022.7 724.6Z" fill="#a5a39e"/>
<path d="M1234.5 317.4L1255.7 317L1252.5 310.3L1231.8 310.6Z" fill="#b2b9c6"/>
<path d="M1324.1 323L1345.6 322.6L1340 315.5L1319 315.9Z" fill="#b2b9c6"/>
<path d="M1040.5 320.9L1062.3 320.5L1064.2 313.6L1042.9 314Z" fill="#b2b9c6"/>
<path d="M1213.2 317.8L1234.5 317.4L1231.8 310.6L1211.1 311Z" fill="#b2b9c6"/>
<path d="M1408.4 483.8L1417.6 475.1L1408.8 441.5L1402.3 450.1Z" fill="#bfc3d0"/>
<path d="M1062.3 320.5L1084.1 320.1L1085.3 313.2L1064.2 313.6Z" fill="#b2b9c6"/>
<path d="M1191.8 318.2L1213.2 317.8L1211.1 311L1190.3 311.4Z" fill="#b2b9c6"/>
<path d="M1377.2 404.1L1379 395.3L1366.5 365.3L1367.3 373.5Z" fill="#b8becc"/>
<path d="M1084.1 320.1L1105.8 319.7L1106.4 312.8L1085.3 313.2Z" fill="#b2b9c6"/>
<path d="M1170.4 318.6L1191.8 318.2L1190.3 311.4L1169.4 311.7Z" fill="#b2b9c6"/>
<path d="M1302.5 323.4L1324.1 323L1319 315.9L1298 316.3Z" fill="#b2b9c6"/>
<path d="M996.1 666.6L988 682.7L993.5 686.7L999.1 669.5Z" fill="#a0a3a8"/>
<path d="M1105.8 319.7L1127.4 319.4L1127.5 312.5L1106.4 312.8Z" fill="#b2b9c6"/>
<path d="M1031.5 728.4L1049.5 735.5L1062.9 735L1042.6 729.8Z" fill="#a8a6a1"/>
<path d="M1148.9 319L1170.4 318.6L1169.4 311.7L1148.5 312.1Z" fill="#b2b9c6"/>
<path d="M1127.4 319.4L1148.9 319L1148.5 312.1L1127.5 312.5Z" fill="#b2b9c6"/>
<path d="M1395.4 459.2L1402.3 450.1L1392.9 417.8L1388.7 426.6Z" fill="#bdc2cf"/>
<path d="M1280.8 323.8L1302.5 323.4L1298 316.3L1276.8 316.7Z" fill="#b2b9c6"/>
<path d="M1009.4 637.9L1004.4 653.3L1008.3 654.4L1010.7 638.3Z" fill="#9ea0a3"/>
<path d="M1015.1 608.7L1013 623.1L1014.6 622.2L1014 607.4Z" fill="#9c9d9d"/>
<path d="M1368 382.1L1367.3 373.5L1354.8 343.9L1358.1 351.8Z" fill="#b4bbc9"/>
<path d="M1049.5 735.5L1067.9 742.8L1083.4 740.3L1062.9 735Z" fill="#aca9a5"/>
<path d="M993 329.1L1015.5 328.7L1018.7 321.3L996.7 321.7Z" fill="#b2b9c6"/>
<path d="M1410.9 518.6L1422.8 510.2L1417.6 475.1L1408.4 483.8Z" fill="#c0c4d0"/>
<path d="M1259.1 324.2L1280.8 323.8L1276.8 316.7L1255.7 317Z" fill="#b2b9c6"/>
<path d="M1384.2 435.8L1388.7 426.6L1379 395.3L1377.2 404.1Z" fill="#bbc0cd"/>
<path d="M1015.5 328.7L1038 328.3L1040.5 320.9L1018.7 321.3Z" fill="#b2b9c6"/>
<path d="M1237.3 324.6L1259.1 324.2L1255.7 317L1234.5 317.4Z" fill="#b2b9c6"/>
<path d="M988 682.7L979.6 699.6L987.6 704.8L993.5 686.7Z" fill="#a2a6ab"/>
<path d="M1329.5 330.4L1351.6 330L1345.6 322.6L1324.1 323Z" fill="#b2b9c6"/>
<path d="M1398.8 492.8L1408.4 483.8L1402.3 450.1L1395.4 459.2Z" fill="#bfc3cf"/>
<path d="M1067.9 742.8L1086.7 750.3L1104.3 745.7L1083.4 740.3Z" fill="#afada9"/>
<path d="M1038 328.3L1060.4 327.9L1062.3 320.5L1040.5 320.9Z" fill="#b2b9c6"/>
<path d="M1215.4 325L1237.3 324.6L1234.5 317.4L1213.2 317.8Z" fill="#b2b9c6"/>
<path d="M1060.4 327.9L1082.7 327.4L1084.1 320.1L1062.3 320.5Z" fill="#b2b9c6"/>
<path d="M1375.3 413.3L1377.2 404.1L1367.3 373.5L1368 382.1Z" fill="#b7bdcb"/>
<path d="M1193.4 325.4L1215.4 325L1213.2 317.8L1191.8 318.2Z" fill="#b2b9c6"/>
<path d="M1082.7 327.4L1105 327L1105.8 319.7L1084.1 320.1Z" fill="#b2b9c6"/>
<path d="M1307.3 330.9L1329.5 330.4L1324.1 323L1302.5 323.4Z" fill="#b2b9c6"/>
<path d="M1004.4 653.3L999.1 669.5L1005.8 671.3L1008.3 654.4Z" fill="#a1a3a7"/>
<path d="M1171.4 325.8L1193.4 325.4L1191.8 318.2L1170.4 318.6Z" fill="#b2b9c6"/>
<path d="M1105 327L1127.2 326.6L1127.4 319.4L1105.8 319.7Z" fill="#b2b9c6"/>
<path d="M1149.4 326.2L1171.4 325.8L1170.4 318.6L1148.9 319Z" fill="#b2b9c6"/>
<path d="M1388.2 468.6L1395.4 459.2L1388.7 426.6L1384.2 435.8Z" fill="#bdc1ce"/>
<path d="M1127.2 326.6L1149.4 326.2L1148.9 319L1127.4 319.4Z" fill="#b2b9c6"/>
<path d="M1409.5 554.4L1424 546.5L1422.8 510.2L1410.9 518.6Z" fill="#c1c5cf"/>
<path d="M1013.5 593.4L1014 607.4L1015.7 605.4L1012.3 591.3Z" fill="#9d9d9b"/>
<path d="M1086.7 750.3L1105.9 757.9L1125.5 751.1L1104.3 745.7Z" fill="#b2b0ae"/>
<path d="M1013 623.1L1010.7 638.3L1015.2 637.8L1014.6 622.2Z" fill="#9fa0a1"/>
<path d="M1022.7 724.6L1042.6 729.8L1057.4 729.2L1035.4 726.2Z" fill="#a7a5a1"/>
<path d="M1285 331.3L1307.3 330.9L1302.5 323.4L1280.8 323.8Z" fill="#b2b9c6"/>
<path d="M979.6 699.6L970.6 717.4L981.3 724L987.6 704.8Z" fill="#a4a8ae"/>
<path d="M1398.5 527.4L1410.9 518.6L1408.4 483.8L1398.8 492.8Z" fill="#c0c4cf"/>
<path d="M1368.9 391.2L1368 382.1L1358.1 351.8L1361.6 360.1Z" fill="#b3b9c7"/>
<path d="M1105.9 757.9L1125.6 765.7L1147.1 756.7L1125.5 751.1Z" fill="#b5b4b2"/>
<path d="M989 336.9L1012.2 336.5L1015.5 328.7L993 329.1Z" fill="#b2b9c6"/>
<path d="M1379.6 445.5L1384.2 435.8L1377.2 404.1L1375.3 413.3Z" fill="#babfcc"/>
<path d="M1262.6 331.7L1285 331.3L1280.8 323.8L1259.1 324.2Z" fill="#b2b9c6"/>
<path d="M1042.6 729.8L1062.9 735L1079.5 732.2L1057.4 729.2Z" fill="#aaa8a4"/>
<path d="M1388.7 502.2L1398.8 492.8L1395.4 459.2L1388.2 468.6Z" fill="#bfc3ce"/>
<path d="M1012.2 336.5L1035.3 336L1038 328.3L1015.5 328.7Z" fill="#b2b9c6"/>
<path d="M1403.9 590.9L1421 583.9L1424 546.5L1409.5 554.4Z" fill="#c2c5cf"/>
<path d="M1125.6 765.7L1145.6 773.7L1169 762.3L1147.1 756.7Z" fill="#b8b6b6"/>
<path d="M1240.2 332.1L1262.6 331.7L1259.1 324.2L1237.3 324.6Z" fill="#b2b9c6"/>
<path d="M1335.1 338.3L1357.9 337.9L1351.6 330L1329.5 330.4Z" fill="#b2b9c6"/>
<path d="M999.1 669.5L993.5 686.7L1003.1 689.3L1005.8 671.3Z" fill="#a3a6aa"/>
<path d="M1009 578L1012.3 591.3L1014 588.4L1007.7 575.2Z" fill="#9e9d9a"/>
<path d="M1035.3 336L1058.4 335.6L1060.4 327.9L1038 328.3Z" fill="#b2b9c6"/>
<path d="M1062.9 735L1083.4 740.3L1101.9 735.2L1079.5 732.2Z" fill="#aeaca8"/>
<path d="M1217.7 332.6L1240.2 332.1L1237.3 324.6L1215.4 325Z" fill="#b2b9c6"/>
<path d="M1394.4 562.6L1409.5 554.4L1410.9 518.6L1398.5 527.4Z" fill="#c1c5cf"/>
<path d="M1010.7 638.3L1008.3 654.4L1015.8 654.2L1015.2 637.8Z" fill="#a1a3a5"/>
<path d="M1014 607.4L1014.6 622.2L1019.4 620.2L1015.7 605.4Z" fill="#a0a09f"/>
<path d="M1145.6 773.7L1166.2 781.8L1191.2 768L1169 762.3Z" fill="#bab9b9"/>
<path d="M1373.3 423.1L1375.3 413.3L1368 382.1L1368.9 391.2Z" fill="#b6bbc9"/>
<path d="M1058.4 335.6L1081.3 335.2L1082.7 327.4L1060.4 327.9Z" fill="#b2b9c6"/>
<path d="M1195.2 333L1217.7 332.6L1215.4 325L1193.4 325.4Z" fill="#b2b9c6"/>
<path d="M1312.3 338.8L1335.1 338.3L1329.5 330.4L1307.3 330.9Z" fill="#b2b9c6"/>
<path d="M1380.6 478.5L1388.2 468.6L1384.2 435.8L1379.6 445.5Z" fill="#bcc0cc"/>
<path d="M1081.3 335.2L1104.3 334.7L1105 327L1082.7 327.4Z" fill="#b2b9c6"/>
<path d="M1172.6 333.4L1195.2 333L1193.4 325.4L1171.4 325.8Z" fill="#b2b9c6"/>
<path d="M1083.4 740.3L1104.3 745.7L1124.5 738.3L1101.9 735.2Z" fill="#b1afac"/>
<path d="M1104.3 334.7L1127.1 334.3L1127.2 326.6L1105 327Z" fill="#b2b9c6"/>
<path d="M1149.9 333.9L1172.6 333.4L1171.4 325.8L1149.4 326.2Z" fill="#b2b9c6"/>
<path d="M1127.1 334.3L1149.9 333.9L1149.4 326.2L1127.2 326.6Z" fill="#b2b9c6"/>
<path d="M1166.2 781.8L1187.2 790.2L1213.8 773.9L1191.2 768Z" fill="#bbbbbc"/>
<path d="M1394 627.5L1413.5 621.8L1421 583.9L1403.9 590.9Z" fill="#c2c5ce"/>
<path d="M1385.7 536.5L1398.5 527.4L1398.8 492.8L1388.7 502.2Z" fill="#c0c4ce"/>
<path d="M1289.4 339.2L1312.3 338.8L1307.3 330.9L1285 331.3Z" fill="#b2b9c6"/>
<path d="M1187.2 790.2L1208.7 798.7L1236.8 779.8L1213.8 773.9Z" fill="#bcbcbf"/>
<path d="M1104.3 745.7L1125.5 751.1L1147.3 741.4L1124.5 738.3Z" fill="#b5b3b1"/>
<path d="M1386.3 598.1L1403.9 590.9L1409.5 554.4L1394.4 562.6Z" fill="#c2c5ce"/>
<path d="M993.5 686.7L987.6 704.8L1000.3 708.3L1003.1 689.3Z" fill="#a5a8ad"/>
<path d="M1208.7 798.7L1230.7 807.4L1260.2 785.8L1236.8 779.8Z" fill="#bdbec1"/>
<path d="M1013.6 723.3L1035.4 726.2L1052 725.7L1028.4 725.1Z" fill="#a6a4a0"/>
<path d="M984.8 345.2L1008.6 344.7L1012.2 336.5L989 336.9Z" fill="#b2b9c6"/>
<path d="M1374.7 455.7L1379.6 445.5L1375.3 413.3L1373.3 423.1Z" fill="#b9bdca"/>
<path d="M1266.4 339.7L1289.4 339.2L1285 331.3L1262.6 331.7Z" fill="#b2b9c6"/>
<path d="M1230.7 807.4L1253.2 816.4L1283.9 791.9L1260.2 785.8Z" fill="#bdbec3"/>
<path d="M1125.5 751.1L1147.1 756.7L1170.3 744.5L1147.3 741.4Z" fill="#b7b6b5"/>
<path d="M1001.7 562.7L1007.7 575.2L1009.4 571.5L1000.3 559.4Z" fill="#9e9d99"/>
<path d="M1378.3 512.1L1388.7 502.2L1388.2 468.6L1380.6 478.5Z" fill="#bec2cd"/>
<path d="M1253.2 816.4L1276.2 825.5L1308.1 798.2L1283.9 791.9Z" fill="#bebfc4"/>
<path d="M1379.7 663.8L1401.3 659.8L1413.5 621.8L1394 627.5Z" fill="#c2c5cd"/>
<path d="M1012.3 591.3L1015.7 605.4L1020.6 602.2L1014 588.4Z" fill="#a1a09e"/>
<path d="M1008.3 654.4L1005.8 671.3L1016.5 671.6L1015.8 654.2Z" fill="#a4a6a9"/>
<path d="M1008.6 344.7L1032.5 344.3L1035.3 336L1012.2 336.5Z" fill="#b2b9c6"/>
<path d="M1378.9 571L1394.4 562.6L1398.5 527.4L1385.7 536.5Z" fill="#c1c4ce"/>
<path d="M1147.1 756.7L1169 762.3L1193.5 747.7L1170.3 744.5Z" fill="#bab9b9"/>
<path d="M1035.4 726.2L1057.4 729.2L1075.7 726.3L1052 725.7Z" fill="#a9a7a3"/>
<path d="M1341.2 346.7L1364.6 346.2L1357.9 337.9L1335.1 338.3Z" fill="#b2b9c6"/>
<path d="M1243.3 340.1L1266.4 339.7L1262.6 331.7L1240.2 332.1Z" fill="#b2b9c6"/>
<path d="M1014.6 622.2L1015.2 637.8L1023.2 635.8L1019.4 620.2Z" fill="#a2a3a3"/>
<path d="M1374.1 633.3L1394 627.5L1403.9 590.9L1386.3 598.1Z" fill="#c3c5cd"/>
<path d="M1169 762.3L1191.2 768L1216.9 750.8L1193.5 747.7Z" fill="#bcbbbc"/>
<path d="M1032.5 344.3L1056.2 343.8L1058.4 335.6L1035.3 336Z" fill="#b2b9c6"/>
<path d="M1220.2 340.6L1243.3 340.1L1240.2 332.1L1217.7 332.6Z" fill="#b2b9c6"/>
<path d="M1361.2 699.1L1384.3 697.2L1401.3 659.8L1379.7 663.8Z" fill="#c2c4cc"/>
<path d="M1191.2 768L1213.8 773.9L1240.5 754L1216.9 750.8Z" fill="#bdbdbf"/>
<path d="M1283.9 791.9L1308.1 798.2L1337.3 767.2L1312.7 763.8Z" fill="#bfc1c6"/>
<path d="M1371.2 433.4L1373.3 423.1L1368.9 391.2L1369.8 400.8Z" fill="#b4b9c6"/>
<path d="M1057.4 729.2L1079.5 732.2L1099.4 726.8L1075.7 726.3Z" fill="#acaaa7"/>
<path d="M1213.8 773.9L1236.8 779.8L1264.4 757.3L1240.5 754Z" fill="#bebec2"/>
<path d="M1260.2 785.8L1283.9 791.9L1312.7 763.8L1288.4 760.5Z" fill="#bfc0c5"/>
<path d="M1056.2 343.8L1079.9 343.3L1081.3 335.2L1058.4 335.6Z" fill="#b2b9c6"/>
<path d="M1372.7 488.9L1380.6 478.5L1379.6 445.5L1374.7 455.7Z" fill="#bbbfcb"/>
<path d="M1236.8 779.8L1260.2 785.8L1288.4 760.5L1264.4 757.3Z" fill="#bfbfc4"/>
<path d="M1197 341L1220.2 340.6L1217.7 332.6L1195.2 333Z" fill="#b2b9c6"/>
<path d="M1317.7 347.2L1341.2 346.7L1335.1 338.3L1312.3 338.8Z" fill="#b2b9c6"/>
<path d="M1372.4 545.9L1385.7 536.5L1388.7 502.2L1378.3 512.1Z" fill="#c0c3cd"/>
<path d="M1338.7 732.7L1362.9 733.2L1384.3 697.2L1361.2 699.1Z" fill="#c1c3ca"/>
<path d="M1312.7 763.8L1337.3 767.2L1362.9 733.2L1338.7 732.7Z" fill="#c0c2c8"/>
<path d="M1079.9 343.3L1103.4 342.9L1104.3 334.7L1081.3 335.2Z" fill="#b2b9c6"/>
<path d="M1368.2 605.5L1386.3 598.1L1394.4 562.6L1378.9 571Z" fill="#c2c5cd"/>
<path d="M1173.7 341.5L1197 341L1195.2 333L1172.6 333.4Z" fill="#b2b9c6"/>
<path d="M987.6 704.8L981.3 724L997.3 728.6L1000.3 708.3Z" fill="#a6aab0"/>
<path d="M1357.9 667.8L1379.7 663.8L1394 627.5L1374.1 633.3Z" fill="#c3c5cc"/>
<path d="M1079.5 732.2L1101.9 735.2L1123.2 727.4L1099.4 726.8Z" fill="#b0adab"/>
<path d="M1103.4 342.9L1126.9 342.4L1127.1 334.3L1104.3 334.7Z" fill="#b2b9c6"/>
<path d="M1150.4 342L1173.7 341.5L1172.6 333.4L1149.9 333.9Z" fill="#b2b9c6"/>
<path d="M1126.9 342.4L1150.4 342L1149.9 333.9L1127.1 334.3Z" fill="#b2b9c6"/>
<path d="M1288.4 760.5L1312.7 763.8L1338.7 732.7L1314.6 732.1Z" fill="#c0c2c7"/>
<path d="M967.6 524L978.5 533.9L976.9 530L962.7 520.8Z" fill="#9d9a95"/>
<path d="M991.5 547.9L1000.3 559.4L1001.9 555.1L989.9 544.3Z" fill="#9f9d98"/>
<path d="M1294.1 347.6L1317.7 347.2L1312.3 338.8L1289.4 339.2Z" fill="#b2b9c6"/>
<path d="M1101.9 735.2L1124.5 738.3L1146.9 728L1123.2 727.4Z" fill="#b3b1af"/>
<path d="M1337.9 701L1361.2 699.1L1379.7 663.8L1357.9 667.8Z" fill="#c2c4cb"/>
<path d="M1314.6 732.1L1338.7 732.7L1361.2 699.1L1337.9 701Z" fill="#c2c3c9"/>
<path d="M1007.7 575.2L1014 588.4L1018.9 584.2L1009.4 571.5Z" fill="#a1a09d"/>
<path d="M1264.4 757.3L1288.4 760.5L1314.6 732.1L1290.5 731.5Z" fill="#c0c1c6"/>
<path d="M1353.8 639.3L1374.1 633.3L1386.3 598.1L1368.2 605.5Z" fill="#c3c5cc"/>
<path d="M1005.8 671.3L1003.1 689.3L1017.2 690.1L1016.5 671.6Z" fill="#a6a8ac"/>
<path d="M1124.5 738.3L1147.3 741.4L1170.8 728.6L1146.9 728Z" fill="#b6b5b3"/>
<path d="M1362.8 579.7L1378.9 571L1385.7 536.5L1372.4 545.9Z" fill="#c1c4cd"/>
<path d="M1369.5 466.4L1374.7 455.7L1373.3 423.1L1371.2 433.4Z" fill="#b7bbc7"/>
<path d="M1367.3 522.4L1378.3 512.1L1380.6 478.5L1372.7 488.9Z" fill="#bdc1cb"/>
<path d="M1015.7 605.4L1019.4 620.2L1027.6 616.8L1020.6 602.2Z" fill="#a3a3a2"/>
<path d="M980.3 354L1004.9 353.5L1008.6 344.7L984.8 345.2Z" fill="#b2b9c6"/>
<path d="M1240.5 754L1264.4 757.3L1290.5 731.5L1266.5 730.9Z" fill="#c0c0c4"/>
<path d="M1147.3 741.4L1170.3 744.5L1194.6 729.2L1170.8 728.6Z" fill="#b9b8b8"/>
<path d="M1015.2 637.8L1015.8 654.2L1027.2 652.4L1023.2 635.8Z" fill="#a5a6a7"/>
<path d="M1270.4 348.1L1294.1 347.6L1289.4 339.2L1266.4 339.7Z" fill="#b2b9c6"/>
<path d="M1216.9 750.8L1240.5 754L1266.5 730.9L1242.5 730.3Z" fill="#bfbfc2"/>
<path d="M1170.3 744.5L1193.5 747.7L1218.5 729.7L1194.6 729.2Z" fill="#bcbbbb"/>
<path d="M1193.5 747.7L1216.9 750.8L1242.5 730.3L1218.5 729.7Z" fill="#bebdbf"/>
<path d="M1335.8 671.9L1357.9 667.8L1374.1 633.3L1353.8 639.3Z" fill="#c3c4cb"/>
<path d="M1290.5 731.5L1314.6 732.1L1337.9 701L1314.5 702.9Z" fill="#c1c2c8"/>
<path d="M1347.5 355.6L1371.7 355.1L1364.6 346.2L1341.2 346.7Z" fill="#b2b9c6"/>
<path d="M1314.5 702.9L1337.9 701L1357.9 667.8L1335.8 671.9Z" fill="#c2c4ca"/>
<path d="M1004.9 353.5L1029.4 353L1032.5 344.3L1008.6 344.7Z" fill="#b2b9c6"/>
<path d="M1246.7 348.6L1270.4 348.1L1266.4 339.7L1243.3 340.1Z" fill="#b2b9c6"/>
<path d="M1349.6 613L1368.2 605.5L1378.9 571L1362.8 579.7Z" fill="#c2c4cc"/>
<path d="M1266.5 730.9L1290.5 731.5L1314.5 702.9L1291 704.8Z" fill="#c1c2c6"/>
<path d="M1358.5 555.8L1372.4 545.9L1378.3 512.1L1367.3 522.4Z" fill="#bfc2cb"/>
<path d="M1029.4 353L1053.9 352.5L1056.2 343.8L1032.5 344.3Z" fill="#b2b9c6"/>
<path d="M1222.8 349.1L1246.7 348.6L1243.3 340.1L1220.2 340.6Z" fill="#b2b9c6"/>
<path d="M1369 444.3L1371.2 433.4L1369.8 400.8L1370.7 411Z" fill="#b2b7c3"/>
<path d="M1364.4 499.8L1372.7 488.9L1374.7 455.7L1369.5 466.4Z" fill="#babdc8"/>
<path d="M1028.4 725.1L1052 725.7L1072.7 722.5L1047.7 724.5Z" fill="#a7a5a2"/>
<path d="M1333.1 645.3L1353.8 639.3L1368.2 605.5L1349.6 613Z" fill="#c2c4cb"/>
<path d="M1323.3 356.1L1347.5 355.6L1341.2 346.7L1317.7 347.2Z" fill="#b2b9c6"/>
<path d="M1053.9 352.5L1078.3 352L1079.9 343.3L1056.2 343.8Z" fill="#b2b9c6"/>
<path d="M1242.5 730.3L1266.5 730.9L1291 704.8L1267.3 706.7Z" fill="#c0c0c4"/>
<path d="M1291 704.8L1314.5 702.9L1335.8 671.9L1313.4 676.1Z" fill="#c2c3c8"/>
<path d="M1199 349.6L1222.8 349.1L1220.2 340.6L1197 341Z" fill="#b2b9c6"/>
<path d="M978.5 533.9L989.9 544.3L991.6 539.5L976.9 530Z" fill="#9f9d98"/>
<path d="M1313.4 676.1L1335.8 671.9L1353.8 639.3L1333.1 645.3Z" fill="#c2c4ca"/>
<path d="M1078.3 352L1102.6 351.5L1103.4 342.9L1079.9 343.3Z" fill="#b2b9c6"/>
<path d="M1000.3 559.4L1009.4 571.5L1014.3 566.5L1001.9 555.1Z" fill="#a2a09c"/>
<path d="M1175 350L1199 349.6L1197 341L1173.7 341.5Z" fill="#b2b9c6"/>
<path d="M1003.1 689.3L1000.3 708.3L1018 709.7L1017.2 690.1Z" fill="#a8aaaf"/>
<path d="M1052 725.7L1075.7 726.3L1097.5 720.4L1072.7 722.5Z" fill="#aaa8a5"/>
<path d="M949.1 512.1L962.7 520.8L961.2 516.7L944.3 508.9Z" fill="#9d9b95"/>
<path d="M1218.5 729.7L1242.5 730.3L1267.3 706.7L1243.5 708.6Z" fill="#bfbfc1"/>
<path d="M1102.6 351.5L1126.8 351L1126.9 342.4L1103.4 342.9Z" fill="#b2b9c6"/>
<path d="M1150.9 350.5L1175 350L1173.7 341.5L1150.4 342Z" fill="#b2b9c6"/>
<path d="M1126.8 351L1150.9 350.5L1150.4 342L1126.9 342.4Z" fill="#b2b9c6"/>
<path d="M1346.2 588.8L1362.8 579.7L1372.4 545.9L1358.5 555.8Z" fill="#c0c2cb"/>
<path d="M1014 588.4L1020.6 602.2L1029 597.4L1018.9 584.2Z" fill="#a4a3a1"/>
<path d="M1075.7 726.3L1099.4 726.8L1122.2 718.4L1097.5 720.4Z" fill="#adaba9"/>
<path d="M1019.4 620.2L1023.2 635.8L1035 632.1L1027.6 616.8Z" fill="#a6a6a6"/>
<path d="M1194.6 729.2L1218.5 729.7L1243.5 708.6L1219.5 710.6Z" fill="#bdbcbe"/>
<path d="M1015.8 654.2L1016.5 671.6L1031.5 669.9L1027.2 652.4Z" fill="#a7a9ab"/>
<path d="M1299 356.6L1323.3 356.1L1317.7 347.2L1294.1 347.6Z" fill="#b2b9c6"/>
<path d="M1099.4 726.8L1123.2 727.4L1146.8 716.5L1122.2 718.4Z" fill="#b1afad"/>
<path d="M1267.3 706.7L1291 704.8L1313.4 676.1L1290.7 680.3Z" fill="#c1c2c6"/>
<path d="M1355.9 533.1L1367.3 522.4L1372.7 488.9L1364.4 499.8Z" fill="#bcbfc9"/>
<path d="M1170.8 728.6L1194.6 729.2L1219.5 710.6L1195.4 712.5Z" fill="#bbbaba"/>
<path d="M912 494.1L927.9 501.4L923.4 498.3L904 492.1Z" fill="#9b9993"/>
<path d="M1123.2 727.4L1146.9 728L1171.2 714.5L1146.8 716.5Z" fill="#b4b3b1"/>
<path d="M1146.9 728L1170.8 728.6L1195.4 712.5L1171.2 714.5Z" fill="#b8b6b6"/>
<path d="M1364 477.8L1369.5 466.4L1371.2 433.4L1369 444.3Z" fill="#b5b9c4"/>
<path d="M1330.6 620.8L1349.6 613L1362.8 579.7L1346.2 588.8Z" fill="#c1c3ca"/>
<path d="M975.5 363.3L1000.9 362.8L1004.9 353.5L980.3 354Z" fill="#b2b9c6"/>
<path d="M1290.7 680.3L1313.4 676.1L1333.1 645.3L1311.9 651.5Z" fill="#c2c2c8"/>
<path d="M1311.9 651.5L1333.1 645.3L1349.6 613L1330.6 620.8Z" fill="#c1c3c9"/>
<path d="M1274.7 357.1L1299 356.6L1294.1 347.6L1270.4 348.1Z" fill="#b2b9c6"/>
<path d="M1243.5 708.6L1267.3 706.7L1290.7 680.3L1267.6 684.5Z" fill="#c0c0c3"/>
<path d="M1354.3 365L1379.2 364.5L1371.7 355.1L1347.5 355.6Z" fill="#b2b9c6"/>
<path d="M1344 566L1358.5 555.8L1367.3 522.4L1355.9 533.1Z" fill="#bdc0c9"/>
<path d="M1000.9 362.8L1026.2 362.3L1029.4 353L1004.9 353.5Z" fill="#b2b9c6"/>
<path d="M1250.2 357.6L1274.7 357.1L1270.4 348.1L1246.7 348.6Z" fill="#b2b9c6"/>
<path d="M1000.3 708.3L997.3 728.6L1018.8 730.6L1018 709.7Z" fill="#a9acb1"/>
<path d="M1355.7 511.3L1364.4 499.8L1369.5 466.4L1364 477.8Z" fill="#b8bbc5"/>
<path d="M1219.5 710.6L1243.5 708.6L1267.6 684.5L1244.3 688.9Z" fill="#bebec0"/>
<path d="M989.9 544.3L1001.9 555.1L1006.9 549.4L991.6 539.5Z" fill="#a2a09b"/>
<path d="M1026.2 362.3L1051.5 361.7L1053.9 352.5L1029.4 353Z" fill="#b2b9c6"/>
<path d="M1267.6 684.5L1290.7 680.3L1311.9 651.5L1290.3 657.8Z" fill="#c0c1c5"/>
<path d="M1009.4 571.5L1018.9 584.2L1027.4 578.3L1014.3 566.5Z" fill="#a5a3a0"/>
<path d="M1225.6 358.1L1250.2 357.6L1246.7 348.6L1222.8 349.1Z" fill="#b2b9c6"/>
<path d="M1329 598.1L1346.2 588.8L1358.5 555.8L1344 566Z" fill="#bfc1c8"/>
<path d="M962.7 520.8L976.9 530L978.8 524.8L961.2 516.7Z" fill="#a09d98"/>
<path d="M1329.4 365.5L1354.3 365L1347.5 355.6L1323.3 356.1Z" fill="#b2b9c6"/>
<path d="M1020.6 602.2L1027.6 616.8L1039.6 611.4L1029 597.4Z" fill="#a7a7a5"/>
<path d="M1051.5 361.7L1076.6 361.2L1078.3 352L1053.9 352.5Z" fill="#b2b9c6"/>
<path d="M1016.5 671.6L1017.2 690.1L1036.1 688.4L1031.5 669.9Z" fill="#a9abae"/>
<path d="M1290.3 657.8L1311.9 651.5L1330.6 620.8L1310.9 628.9Z" fill="#c0c1c7"/>
<path d="M1310.9 628.9L1330.6 620.8L1346.2 588.8L1329 598.1Z" fill="#c0c1c8"/>
<path d="M1195.4 712.5L1219.5 710.6L1244.3 688.9L1220.6 693.2Z" fill="#bcbbbc"/>
<path d="M1201 358.6L1225.6 358.1L1222.8 349.1L1199 349.6Z" fill="#b2b9c6"/>
<path d="M1023.2 635.8L1027.2 652.4L1042.7 648.4L1035 632.1Z" fill="#a8a9aa"/>
<path d="M1076.6 361.2L1101.7 360.7L1102.6 351.5L1078.3 352Z" fill="#b2b9c6"/>
<path d="M927.9 501.4L944.3 508.9L943.3 504.6L923.4 498.3Z" fill="#9d9b95"/>
<path d="M1176.3 359.1L1201 358.6L1199 349.6L1175 350Z" fill="#b2b9c6"/>
<path d="M1101.7 360.7L1126.6 360.2L1126.8 351L1102.6 351.5Z" fill="#b2b9c6"/>
<path d="M1151.5 359.6L1176.3 359.1L1175 350L1150.9 350.5Z" fill="#b2b9c6"/>
<path d="M1343.9 544.4L1355.9 533.1L1364.4 499.8L1355.7 511.3Z" fill="#babdc5"/>
<path d="M1171.2 714.5L1195.4 712.5L1220.6 693.2L1196.6 697.7Z" fill="#b9b8b8"/>
<path d="M1126.6 360.2L1151.5 359.6L1150.9 350.5L1126.8 351Z" fill="#b2b9c6"/>
<path d="M1244.3 688.9L1267.6 684.5L1290.3 657.8L1268.2 664.3Z" fill="#bebfc2"/>
<path d="M1304.3 366.1L1329.4 365.5L1323.3 356.1L1299 356.6Z" fill="#b2b9c6"/>
<path d="M1146.8 716.5L1171.2 714.5L1196.6 697.7L1172.3 702.2Z" fill="#b5b4b4"/>
<path d="M1358.3 489.8L1364 477.8L1369 444.3L1366.7 455.8Z" fill="#b2b6c0"/>
<path d="M1122.2 718.4L1146.8 716.5L1172.3 702.2L1147.6 706.7Z" fill="#b2b0af"/>
<path d="M1047.7 724.5L1072.7 722.5L1097.2 716.1L1071.4 720.8Z" fill="#a8a6a3"/>
<path d="M1097.5 720.4L1122.2 718.4L1147.6 706.7L1122.6 711.4Z" fill="#aeadab"/>
<path d="M1072.7 722.5L1097.5 720.4L1122.6 711.4L1097.2 716.1Z" fill="#aba9a7"/>
<path d="M1329 576.7L1344 566L1355.9 533.1L1343.9 544.4Z" fill="#bcbec6"/>
<path d="M970.4 373.3L996.7 372.7L1000.9 362.8L975.5 363.3Z" fill="#b2b9c6"/>
<path d="M1279.2 366.6L1304.3 366.1L1299 356.6L1274.7 357.1Z" fill="#b2b9c6"/>
<path d="M1268.2 664.3L1290.3 657.8L1310.9 628.9L1290.7 637.1Z" fill="#bebfc3"/>
<path d="M1220.6 693.2L1244.3 688.9L1268.2 664.3L1245.7 670.8Z" fill="#bcbcbe"/>
<path d="M1361.6 375L1387.2 374.5L1379.2 364.5L1354.3 365Z" fill="#b2b9c6"/>
<path d="M1311.1 607.8L1329 598.1L1344 566L1329 576.7Z" fill="#bdbfc5"/>
<path d="M1290.7 637.1L1310.9 628.9L1329 598.1L1311.1 607.8Z" fill="#bebfc5"/>
<path d="M1001.9 555.1L1014.3 566.5L1022.9 559.7L1006.9 549.4Z" fill="#a5a39f"/>
<path d="M976.9 530L991.6 539.5L997 533.1L978.8 524.8Z" fill="#a2a09b"/>
<path d="M1018.9 584.2L1029 597.4L1041.1 590.7L1027.4 578.3Z" fill="#a8a7a4"/>
<path d="M996.7 372.7L1022.8 372.1L1026.2 362.3L1000.9 362.8Z" fill="#b2b9c6"/>
<path d="M1253.9 367.2L1279.2 366.6L1274.7 357.1L1250.2 357.6Z" fill="#b2b9c6"/>
<path d="M1017.2 690.1L1018 709.7L1040.9 708.2L1036.1 688.4Z" fill="#aaadb1"/>
<path d="M1346.4 523.4L1355.7 511.3L1364 477.8L1358.3 489.8Z" fill="#b5b8c1"/>
<path d="M1027.6 616.8L1035 632.1L1050.7 626.2L1039.6 611.4Z" fill="#aaa9a9"/>
<path d="M1027.2 652.4L1031.5 669.9L1051 665.5L1042.7 648.4Z" fill="#aaabad"/>
<path d="M944.3 508.9L961.2 516.7L963.8 511.1L943.3 504.6Z" fill="#9f9d98"/>
<path d="M1196.6 697.7L1220.6 693.2L1245.7 670.8L1222.6 677.6Z" fill="#b9b8ba"/>
<path d="M1022.8 372.1L1048.9 371.6L1051.5 361.7L1026.2 362.3Z" fill="#b2b9c6"/>
<path d="M1228.6 367.7L1253.9 367.2L1250.2 357.6L1225.6 358.1Z" fill="#b2b9c6"/>
<path d="M1335.8 375.6L1361.6 375L1354.3 365L1329.4 365.5Z" fill="#b2b9c6"/>
<path d="M1245.7 670.8L1268.2 664.3L1290.7 637.1L1269.9 645.6Z" fill="#bcbcc0"/>
<path d="M1048.9 371.6L1074.8 371L1076.6 361.2L1051.5 361.7Z" fill="#b2b9c6"/>
<path d="M1331.4 556.2L1343.9 544.4L1355.7 511.3L1346.4 523.4Z" fill="#b7bac2"/>
<path d="M1203.2 368.2L1228.6 367.7L1225.6 358.1L1201 358.6Z" fill="#b2b9c6"/>
<path d="M1172.3 702.2L1196.6 697.7L1222.6 677.6L1199.1 684.5Z" fill="#b6b5b5"/>
<path d="M1074.8 371L1100.7 370.5L1101.7 360.7L1076.6 361.2Z" fill="#b2b9c6"/>
<path d="M1177.7 368.8L1203.2 368.2L1201 358.6L1176.3 359.1Z" fill="#b2b9c6"/>
<path d="M1100.7 370.5L1126.4 369.9L1126.6 360.2L1101.7 360.7Z" fill="#b2b9c6"/>
<path d="M1269.9 645.6L1290.7 637.1L1311.1 607.8L1292.7 617.8Z" fill="#bcbcc1"/>
<path d="M1152.1 369.3L1177.7 368.8L1176.3 359.1L1151.5 359.6Z" fill="#b2b9c6"/>
<path d="M1126.4 369.9L1152.1 369.3L1151.5 359.6L1126.6 360.2Z" fill="#b2b9c6"/>
<path d="M904 492.1L923.4 498.3L923.2 493.7L900.2 488.9Z" fill="#9d9b95"/>
<path d="M1313.3 587.8L1329 576.7L1343.9 544.4L1331.4 556.2Z" fill="#b9bbc2"/>
<path d="M1309.9 376.2L1335.8 375.6L1329.4 365.5L1304.3 366.1Z" fill="#b2b9c6"/>
<path d="M1292.7 617.8L1311.1 607.8L1329 576.7L1313.3 587.8Z" fill="#bbbcc2"/>
<path d="M1352.2 502.4L1358.3 489.8L1366.7 455.8L1364.2 468Z" fill="#afb3bc"/>
<path d="M1147.6 706.7L1172.3 702.2L1199.1 684.5L1175 691.5Z" fill="#b2b1b1"/>
<path d="M1222.6 677.6L1245.7 670.8L1269.9 645.6L1248.5 654.3Z" fill="#b9b9bb"/>
<path d="M1014.3 566.5L1027.4 578.3L1039.6 570.4L1022.9 559.7Z" fill="#a8a7a3"/>
<path d="M991.6 539.5L1006.9 549.4L1015.9 541.8L997 533.1Z" fill="#a5a39e"/>
<path d="M1018 709.7L1018.8 730.6L1046 729.2L1040.9 708.2Z" fill="#acaeb3"/>
<path d="M965 383.9L992.2 383.3L996.7 372.7L970.4 373.3Z" fill="#b2b9c6"/>
<path d="M1029 597.4L1039.6 611.4L1055.4 603.8L1041.1 590.7Z" fill="#abaaa8"/>
<path d="M1284 376.8L1309.9 376.2L1304.3 366.1L1279.2 366.6Z" fill="#b2b9c6"/>
<path d="M1122.6 711.4L1147.6 706.7L1175 691.5L1150.4 698.7Z" fill="#afadad"/>
<path d="M1035 632.1L1042.7 648.4L1062.5 641.7L1050.7 626.2Z" fill="#acacad"/>
<path d="M1369.3 385.8L1395.8 385.2L1387.2 374.5L1361.6 375Z" fill="#b2b9c6"/>
<path d="M1031.5 669.9L1036.1 688.4L1059.7 683.7L1051 665.5Z" fill="#acadb1"/>
<path d="M961.2 516.7L978.8 524.8L984.8 517.8L963.8 511.1Z" fill="#a2a09a"/>
<path d="M1097.2 716.1L1122.6 711.4L1150.4 698.7L1125.2 706Z" fill="#abaaa9"/>
<path d="M1336.7 536.1L1346.4 523.4L1358.3 489.8L1352.2 502.4Z" fill="#b2b5bd"/>
<path d="M992.2 383.3L1019.2 382.7L1022.8 372.1L996.7 372.7Z" fill="#b2b9c6"/>
<path d="M1257.9 377.3L1284 376.8L1279.2 366.6L1253.9 367.2Z" fill="#b2b9c6"/>
<path d="M1071.4 720.8L1097.2 716.1L1125.2 706L1099.4 713.6Z" fill="#a8a7a5"/>
<path d="M1248.5 654.3L1269.9 645.6L1292.7 617.8L1273.5 628.2Z" fill="#b9b9bd"/>
<path d="M1199.1 684.5L1222.6 677.6L1248.5 654.3L1226.4 663.3Z" fill="#b6b5b7"/>
<path d="M1019.2 382.7L1046.1 382.1L1048.9 371.6L1022.8 372.1Z" fill="#b2b9c6"/>
<path d="M1318.2 568.6L1331.4 556.2L1346.4 523.4L1336.7 536.1Z" fill="#b4b7be"/>
<path d="M1342.7 386.4L1369.3 385.8L1361.6 375L1335.8 375.6Z" fill="#b2b9c6"/>
<path d="M923.4 498.3L943.3 504.6L946.8 498.6L923.2 493.7Z" fill="#9f9d98"/>
<path d="M1231.8 377.9L1257.9 377.3L1253.9 367.2L1228.6 367.7Z" fill="#b2b9c6"/>
<path d="M1273.5 628.2L1292.7 617.8L1313.3 587.8L1296.9 599.5Z" fill="#b8b9bd"/>
<path d="M1296.9 599.5L1313.3 587.8L1331.4 556.2L1318.2 568.6Z" fill="#b6b8be"/>
<path d="M1046.1 382.1L1072.9 381.5L1074.8 371L1048.9 371.6Z" fill="#b2b9c6"/>
<path d="M1205.5 378.5L1231.8 377.9L1228.6 367.7L1203.2 368.2Z" fill="#b2b9c6"/>
<path d="M1175 691.5L1199.1 684.5L1226.4 663.3L1203.7 672.6Z" fill="#b2b2b2"/>
<path d="M1027.4 578.3L1041.1 590.7L1057 581.6L1039.6 570.4Z" fill="#abaaa7"/>
<path d="M1006.9 549.4L1022.9 559.7L1035.4 550.8L1015.9 541.8Z" fill="#a9a6a2"/>
<path d="M1072.9 381.5L1099.6 380.9L1100.7 370.5L1074.8 371Z" fill="#b2b9c6"/>
<path d="M1179.2 379.1L1205.5 378.5L1203.2 368.2L1177.7 368.8Z" fill="#b2b9c6"/>
<path d="M1039.6 611.4L1050.7 626.2L1070.5 617.5L1055.4 603.8Z" fill="#adadac"/>
<path d="M1099.6 380.9L1126.3 380.3L1126.4 369.9L1100.7 370.5Z" fill="#b2b9c6"/>
<path d="M1315.9 387L1342.7 386.4L1335.8 375.6L1309.9 376.2Z" fill="#b2b9c6"/>
<path d="M1152.8 379.7L1179.2 379.1L1177.7 368.8L1152.1 369.3Z" fill="#b2b9c6"/>
<path d="M1126.3 380.3L1152.8 379.7L1152.1 369.3L1126.4 369.9Z" fill="#b2b9c6"/>
<path d="M1226.4 663.3L1248.5 654.3L1273.5 628.2L1253.6 639Z" fill="#b5b5b8"/>
<path d="M1042.7 648.4L1051 665.5L1074.9 658.1L1062.5 641.7Z" fill="#aeaeb0"/>
<path d="M1036.1 688.4L1040.9 708.2L1068.9 703.1L1059.7 683.7Z" fill="#adafb3"/>
<path d="M978.8 524.8L997 533.1L1006.6 524.8L984.8 517.8Z" fill="#a5a39e"/>
<path d="M1150.4 698.7L1175 691.5L1203.7 672.6L1180.3 682.2Z" fill="#afaeae"/>
<path d="M959.3 395.2L987.3 394.5L992.2 383.3L965 383.9Z" fill="#b2b9c6"/>
<path d="M1289.1 387.6L1315.9 387L1309.9 376.2L1284 376.8Z" fill="#b2b9c6"/>
<path d="M1377.5 397.2L1405 396.6L1395.8 385.2L1369.3 385.8Z" fill="#b2b9c6"/>
<path d="M1326.5 549.6L1336.7 536.1L1352.2 502.4L1345.7 515.9Z" fill="#afb1b9"/>
<path d="M1253.6 639L1273.5 628.2L1296.9 599.5L1279.8 611.6Z" fill="#b4b5b9"/>
<path d="M943.3 504.6L963.8 511.1L970.8 503.6L946.8 498.6Z" fill="#a29f9a"/>
<path d="M987.3 394.5L1015.3 393.9L1019.2 382.7L992.2 383.3Z" fill="#b2b9c6"/>
<path d="M1125.2 706L1150.4 698.7L1180.3 682.2L1156.1 692.1Z" fill="#abaaaa"/>
<path d="M1304.3 581.7L1318.2 568.6L1336.7 536.1L1326.5 549.6Z" fill="#b1b3b9"/>
<path d="M1279.8 611.6L1296.9 599.5L1318.2 568.6L1304.3 581.7Z" fill="#b3b4b9"/>
<path d="M1262.2 388.2L1289.1 387.6L1284 376.8L1257.9 377.3Z" fill="#b2b9c6"/>
<path d="M1203.7 672.6L1226.4 663.3L1253.6 639L1233 650.2Z" fill="#b2b2b3"/>
<path d="M1022.9 559.7L1039.6 570.4L1055.7 560.1L1035.4 550.8Z" fill="#acaaa6"/>
<path d="M1041.1 590.7L1055.4 603.8L1075.1 593.4L1057 581.6Z" fill="#aeadab"/>
<path d="M1350 397.9L1377.5 397.2L1369.3 385.8L1342.7 386.4Z" fill="#b2b9c6"/>
<path d="M1015.3 393.9L1043.1 393.3L1046.1 382.1L1019.2 382.7Z" fill="#b2b9c6"/>
<path d="M1235.2 388.8L1262.2 388.2L1257.9 377.3L1231.8 377.9Z" fill="#b2b9c6"/>
<path d="M1050.7 626.2L1062.5 641.7L1086.3 631.8L1070.5 617.5Z" fill="#afafb0"/>
<path d="M1099.4 713.6L1125.2 706L1156.1 692.1L1131.2 702.2Z" fill="#a8a7a6"/>
<path d="M997 533.1L1015.9 541.8L1028.9 531.9L1006.6 524.8Z" fill="#a8a6a1"/>
<path d="M1040.9 708.2L1046 729.2L1078.8 723.6L1068.9 703.1Z" fill="#afb1b5"/>
<path d="M1051 665.5L1059.7 683.7L1088 675.4L1074.9 658.1Z" fill="#afb0b3"/>
<path d="M1043.1 393.3L1070.9 392.6L1072.9 381.5L1046.1 382.1Z" fill="#b2b9c6"/>
<path d="M1208 389.5L1235.2 388.8L1231.8 377.9L1205.5 378.5Z" fill="#b2b9c6"/>
<path d="M900.2 488.9L923.2 493.7L928.2 487.1L901.5 484Z" fill="#9f9c98"/>
<path d="M1070.9 392.6L1098.5 392L1099.6 380.9L1072.9 381.5Z" fill="#b2b9c6"/>
<path d="M1233 650.2L1253.6 639L1279.8 611.6L1261.9 624.3Z" fill="#b1b1b4"/>
<path d="M1180.8 390.1L1208 389.5L1205.5 378.5L1179.2 379.1Z" fill="#b2b9c6"/>
<path d="M1180.3 682.2L1203.7 672.6L1233 650.2L1211.5 661.8Z" fill="#aeaeaf"/>
<path d="M1322.4 398.5L1350 397.9L1342.7 386.4L1315.9 387Z" fill="#b2b9c6"/>
<path d="M963.8 511.1L984.8 517.8L995.4 508.7L970.8 503.6Z" fill="#a5a29d"/>
<path d="M1098.5 392L1126.1 391.4L1126.3 380.3L1099.6 380.9Z" fill="#b2b9c6"/>
<path d="M1153.5 390.7L1180.8 390.1L1179.2 379.1L1152.8 379.7Z" fill="#b2b9c6"/>
<path d="M1126.1 391.4L1153.5 390.7L1152.8 379.7L1126.3 380.3Z" fill="#b2b9c6"/>
<path d="M953.1 407.3L982.1 406.6L987.3 394.5L959.3 395.2Z" fill="#b2b9c6"/>
<path d="M1386.4 409.5L1414.8 408.8L1405 396.6L1377.5 397.2Z" fill="#b2b9c6"/>
<path d="M1261.9 624.3L1279.8 611.6L1304.3 581.7L1289.8 595.4Z" fill="#afb0b5"/>
<path d="M1294.6 399.2L1322.4 398.5L1315.9 387L1289.1 387.6Z" fill="#b2b9c6"/>
<path d="M1289.8 595.4L1304.3 581.7L1326.5 549.6L1315.6 563.8Z" fill="#aeafb4"/>
<path d="M1039.6 570.4L1057 581.6L1076.8 569.7L1055.7 560.1Z" fill="#afadaa"/>
<path d="M1055.4 603.8L1070.5 617.5L1094.1 605.6L1075.1 593.4Z" fill="#b0b0af"/>
<path d="M1156.1 692.1L1180.3 682.2L1211.5 661.8L1189.2 673.9Z" fill="#abaaab"/>
<path d="M1015.9 541.8L1035.4 550.8L1052 539.2L1028.9 531.9Z" fill="#aca9a5"/>
<path d="M1062.5 641.7L1074.9 658.1L1103 647L1086.3 631.8Z" fill="#b1b1b3"/>
<path d="M982.1 406.6L1011.1 406L1015.3 393.9L987.3 394.5Z" fill="#b2b9c6"/>
<path d="M1059.7 683.7L1068.9 703.1L1101.9 693.8L1088 675.4Z" fill="#b0b2b6"/>
<path d="M923.2 493.7L946.8 498.6L955.4 490.3L928.2 487.1Z" fill="#a19f9a"/>
<path d="M1266.8 399.9L1294.6 399.2L1289.1 387.6L1262.2 388.2Z" fill="#b2b9c6"/>
<path d="M1211.5 661.8L1233 650.2L1261.9 624.3L1243.2 637.6Z" fill="#adaeb0"/>
<path d="M1357.9 410.2L1386.4 409.5L1377.5 397.2L1350 397.9Z" fill="#b2b9c6"/>
<path d="M984.8 517.8L1006.6 524.8L1020.6 513.9L995.4 508.7Z" fill="#a8a5a0"/>
<path d="M1011.1 406L1040 405.3L1043.1 393.3L1015.3 393.9Z" fill="#b2b9c6"/>
<path d="M1238.8 400.5L1266.8 399.9L1262.2 388.2L1235.2 388.8Z" fill="#b2b9c6"/>
<path d="M1131.2 702.2L1156.1 692.1L1189.2 673.9L1166 686.5Z" fill="#a8a7a7"/>
<path d="M1040 405.3L1068.7 404.6L1070.9 392.6L1043.1 393.3Z" fill="#b2b9c6"/>
<path d="M1210.7 401.2L1238.8 400.5L1235.2 388.8L1208 389.5Z" fill="#b2b9c6"/>
<path d="M1243.2 637.6L1261.9 624.3L1289.8 595.4L1274.4 609.8Z" fill="#acadb0"/>
<path d="M1329.2 410.9L1357.9 410.2L1350 397.9L1322.4 398.5Z" fill="#b2b9c6"/>
<path d="M1057 581.6L1075.1 593.4L1098.7 579.8L1076.8 569.7Z" fill="#b1b0af"/>
<path d="M1068.7 404.6L1097.3 403.9L1098.5 392L1070.9 392.6Z" fill="#b2b9c6"/>
<path d="M1182.5 401.9L1210.7 401.2L1208 389.5L1180.8 390.1Z" fill="#b2b9c6"/>
<path d="M1035.4 550.8L1055.7 560.1L1075.8 546.8L1052 539.2Z" fill="#afada9"/>
<path d="M1070.5 617.5L1086.3 631.8L1114 618.4L1094.1 605.6Z" fill="#b2b2b3"/>
<path d="M1097.3 403.9L1125.8 403.2L1126.1 391.4L1098.5 392Z" fill="#b2b9c6"/>
<path d="M1154.2 402.5L1182.5 401.9L1180.8 390.1L1153.5 390.7Z" fill="#b2b9c6"/>
<path d="M1125.8 403.2L1154.2 402.5L1153.5 390.7L1126.1 391.4Z" fill="#b2b9c6"/>
<path d="M1189.2 673.9L1211.5 661.8L1243.2 637.6L1223.6 651.5Z" fill="#aaaaac"/>
<path d="M946.8 498.6L970.8 503.6L983 493.5L955.4 490.3Z" fill="#a4a19d"/>
<path d="M1274.4 609.8L1289.8 595.4L1315.6 563.8L1304.1 578.9Z" fill="#aaacb0"/>
<path d="M1074.9 658.1L1088 675.4L1120.5 662.9L1103 647Z" fill="#b2b3b6"/>
<path d="M1395.9 422.7L1425.3 422L1414.8 408.8L1386.4 409.5Z" fill="#b2b9c6"/>
<path d="M1068.9 703.1L1078.8 723.6L1116.6 713.3L1101.9 693.8Z" fill="#b1b3b8"/>
<path d="M946.4 420.4L976.6 419.6L982.1 406.6L953.1 407.3Z" fill="#b2b9c6"/>
<path d="M1006.6 524.8L1028.9 531.9L1046.4 519.2L1020.6 513.9Z" fill="#aba8a4"/>
<path d="M1300.5 411.6L1329.2 410.9L1322.4 398.5L1294.6 399.2Z" fill="#b2b9c6"/>
<path d="M976.6 419.6L1006.6 418.9L1011.1 406L982.1 406.6Z" fill="#b2b9c6"/>
<path d="M1271.6 412.4L1300.5 411.6L1294.6 399.2L1266.8 399.9Z" fill="#b2b9c6"/>
<path d="M1366.3 423.5L1395.9 422.7L1386.4 409.5L1357.9 410.2Z" fill="#b2b9c6"/>
<path d="M1223.6 651.5L1243.2 637.6L1274.4 609.8L1258.2 625.1Z" fill="#a9a9ac"/>
<path d="M1075.1 593.4L1094.1 605.6L1121.4 590.2L1098.7 579.8Z" fill="#b4b3b2"/>
<path d="M1055.7 560.1L1076.8 569.7L1100.3 554.6L1075.8 546.8Z" fill="#b2b0ae"/>
<path d="M970.8 503.6L995.4 508.7L1011 496.7L983 493.5Z" fill="#a7a4a0"/>
<path d="M1086.3 631.8L1103 647L1134.8 631.9L1114 618.4Z" fill="#b4b4b6"/>
<path d="M1006.6 418.9L1036.6 418.2L1040 405.3L1011.1 406Z" fill="#b2b9c6"/>
<path d="M1242.7 413.1L1271.6 412.4L1266.8 399.9L1238.8 400.5Z" fill="#b2b9c6"/>
<path d="M1088 675.4L1101.9 693.8L1139.1 679.8L1120.5 662.9Z" fill="#b3b4b8"/>
<path d="M1028.9 531.9L1052 539.2L1072.7 524.7L1046.4 519.2Z" fill="#aeaca8"/>
<path d="M901.5 484L928.2 487.1L939.3 477.8L908.7 476.7Z" fill="#a09e9a"/>
<path d="M1036.6 418.2L1066.4 417.4L1068.7 404.6L1040 405.3Z" fill="#b2b9c6"/>
<path d="M1213.6 413.8L1242.7 413.1L1238.8 400.5L1210.7 401.2Z" fill="#b2b9c6"/>
<path d="M1336.6 424.3L1366.3 423.5L1357.9 410.2L1329.2 410.9Z" fill="#b2b9c6"/>
<path d="M1066.4 417.4L1096 416.7L1097.3 403.9L1068.7 404.6Z" fill="#b2b9c6"/>
<path d="M1184.4 414.5L1213.6 413.8L1210.7 401.2L1182.5 401.9Z" fill="#b2b9c6"/>
<path d="M1096 416.7L1125.6 416L1125.8 403.2L1097.3 403.9Z" fill="#b2b9c6"/>
<path d="M1155.1 415.2L1184.4 414.5L1182.5 401.9L1154.2 402.5Z" fill="#b2b9c6"/>
<path d="M920.9 460.9L932.3 446.3L939.2 434.5L931.5 449.6Z" fill="#a4a7ac"/>
<path d="M1406.1 437L1436.7 436.2L1425.3 422L1395.9 422.7Z" fill="#b2b9c6"/>
<path d="M1125.6 416L1155.1 415.2L1154.2 402.5L1125.8 403.2Z" fill="#b2b9c6"/>
<path d="M995.4 508.7L1020.6 513.9L1039.4 500L1011 496.7Z" fill="#aaa7a3"/>
<path d="M939.2 434.5L970.6 433.6L976.6 419.6L946.4 420.4Z" fill="#b2b9c6"/>
<path d="M1076.8 569.7L1098.7 579.8L1125.7 562.7L1100.3 554.6Z" fill="#b4b3b2"/>
<path d="M1094.1 605.6L1114 618.4L1145.1 601.1L1121.4 590.2Z" fill="#b5b5b6"/>
<path d="M1306.8 425L1336.6 424.3L1329.2 410.9L1300.5 411.6Z" fill="#b2b9c6"/>
<path d="M1103 647L1120.5 662.9L1156.7 645.9L1134.8 631.9Z" fill="#b5b6b8"/>
<path d="M928.2 487.1L955.4 490.3L970 479L939.3 477.8Z" fill="#a2a09c"/>
<path d="M1052 539.2L1075.8 546.8L1099.7 530.3L1072.7 524.7Z" fill="#b1afad"/>
<path d="M1101.9 693.8L1116.6 713.3L1158.7 697.6L1139.1 679.8Z" fill="#b4b6ba"/>
<path d="M970.6 433.6L1001.8 432.8L1006.6 418.9L976.6 419.6Z" fill="#b2b9c6"/>
<path d="M1276.9 425.8L1306.8 425L1300.5 411.6L1271.6 412.4Z" fill="#b2b9c6"/>
<path d="M1375.5 437.8L1406.1 437L1395.9 422.7L1366.3 423.5Z" fill="#b2b9c6"/>
<path d="M1020.6 513.9L1046.4 519.2L1068.2 503.4L1039.4 500Z" fill="#adaba7"/>
<path d="M1001.8 432.8L1032.9 432L1036.6 418.2L1006.6 418.9Z" fill="#b2b9c6"/>
<path d="M1098.7 579.8L1121.4 590.2L1151.9 571.1L1125.7 562.7Z" fill="#b6b6b5"/>
<path d="M1246.9 426.6L1276.9 425.8L1271.6 412.4L1242.7 413.1Z" fill="#b2b9c6"/>
<path d="M1114 618.4L1134.8 631.9L1169.8 612.4L1145.1 601.1Z" fill="#b7b7b9"/>
<path d="M955.4 490.3L983 493.5L1000.8 480.2L970 479Z" fill="#a5a39f"/>
<path d="M1075.8 546.8L1100.3 554.6L1127.4 536L1099.7 530.3Z" fill="#b4b3b1"/>
<path d="M1032.9 432L1063.8 431.3L1066.4 417.4L1036.6 418.2Z" fill="#b2b9c6"/>
<path d="M1120.5 662.9L1139.1 679.8L1179.6 660.7L1156.7 645.9Z" fill="#b6b7bb"/>
<path d="M1344.6 438.6L1375.5 437.8L1366.3 423.5L1336.6 424.3Z" fill="#b2b9c6"/>
<path d="M1216.7 427.3L1246.9 426.6L1242.7 413.1L1213.6 413.8Z" fill="#b2b9c6"/>
<path d="M908.7 476.7L920.9 460.9L931.5 449.6L923.1 466.1Z" fill="#a6a9af"/>
<path d="M1063.8 431.3L1094.7 430.5L1096 416.7L1066.4 417.4Z" fill="#b2b9c6"/>
<path d="M1417.2 452.4L1449 451.5L1436.7 436.2L1406.1 437Z" fill="#b2b9c6"/>
<path d="M1186.4 428.1L1216.7 427.3L1213.6 413.8L1184.4 414.5Z" fill="#b2b9c6"/>
<path d="M1046.4 519.2L1072.7 524.7L1097.5 506.8L1068.2 503.4Z" fill="#b1aeab"/>
<path d="M1094.7 430.5L1125.4 429.7L1125.6 416L1096 416.7Z" fill="#b2b9c6"/>
<path d="M1155.9 428.9L1186.4 428.1L1184.4 414.5L1155.1 415.2Z" fill="#b2b9c6"/>
<path d="M1125.4 429.7L1155.9 428.9L1155.1 415.2L1125.6 416Z" fill="#b2b9c6"/>
<path d="M931.5 449.6L964.1 448.8L970.6 433.6L939.2 434.5Z" fill="#b2b9c6"/>
<path d="M1121.4 590.2L1145.1 601.1L1178.9 579.7L1151.9 571.1Z" fill="#b8b8b9"/>
<path d="M983 493.5L1011 496.7L1031.9 481.4L1000.8 480.2Z" fill="#a8a6a2"/>
<path d="M1313.7 439.5L1344.6 438.6L1336.6 424.3L1306.8 425Z" fill="#b2b9c6"/>
<path d="M1100.3 554.6L1125.7 562.7L1155.7 541.9L1127.4 536Z" fill="#b7b6b5"/>
<path d="M1134.8 631.9L1156.7 645.9L1195.5 624.2L1169.8 612.4Z" fill="#b8b8bb"/>
<path d="M1139.1 679.8L1158.7 697.6L1203.8 676.3L1179.6 660.7Z" fill="#b6b8bc"/>
<path d="M964.1 448.8L996.6 447.9L1001.8 432.8L970.6 433.6Z" fill="#b2b9c6"/>
<path d="M1385.3 453.3L1417.2 452.4L1406.1 437L1375.5 437.8Z" fill="#b2b9c6"/>
<path d="M1072.7 524.7L1099.7 530.3L1127.2 510.2L1097.5 506.8Z" fill="#b4b2b0"/>
<path d="M1282.6 440.3L1313.7 439.5L1306.8 425L1276.9 425.8Z" fill="#b2b9c6"/>
<path d="M1011 496.7L1039.4 500L1063.1 482.7L1031.9 481.4Z" fill="#aca9a6"/>
<path d="M1145.1 601.1L1169.8 612.4L1206.9 588.6L1178.9 579.7Z" fill="#b9b9bb"/>
<path d="M1125.7 562.7L1151.9 571.1L1184.7 547.9L1155.7 541.9Z" fill="#b9b8b8"/>
<path d="M908.7 476.7L939.3 477.8L957.1 465.2L923.1 466.1Z" fill="#a19f9b"/>
<path d="M996.6 447.9L1028.9 447L1032.9 432L1001.8 432.8Z" fill="#b2b9c6"/>
<path d="M1251.4 441.1L1282.6 440.3L1276.9 425.8L1246.9 426.6Z" fill="#b2b9c6"/>
<path d="M1156.7 645.9L1179.6 660.7L1222.3 636.5L1195.5 624.2Z" fill="#b8b9bd"/>
<path d="M1099.7 530.3L1127.4 536L1157.4 513.7L1127.2 510.2Z" fill="#b7b5b4"/>
<path d="M1385.4 495.2L1418.7 496.5L1449 451.5L1417.2 452.4Z" fill="#c1c3c9"/>
<path d="M1353.3 454.2L1385.3 453.3L1375.5 437.8L1344.6 438.6Z" fill="#b2b9c6"/>
<path d="M1028.9 447L1061.1 446.2L1063.8 431.3L1032.9 432Z" fill="#b2b9c6"/>
<path d="M1220 441.9L1251.4 441.1L1246.9 426.6L1216.7 427.3Z" fill="#b2b9c6"/>
<path d="M1039.4 500L1068.2 503.4L1094.5 483.9L1063.1 482.7Z" fill="#afadaa"/>
<path d="M1151.9 571.1L1178.9 579.7L1214.5 554.1L1184.7 547.9Z" fill="#bbbabc"/>
<path d="M1061.1 446.2L1093.2 445.3L1094.7 430.5L1063.8 431.3Z" fill="#b2b9c6"/>
<path d="M1169.8 612.4L1195.5 624.2L1235.8 597.8L1206.9 588.6Z" fill="#babbbe"/>
<path d="M1188.5 442.8L1220 441.9L1216.7 427.3L1186.4 428.1Z" fill="#b2b9c6"/>
<path d="M939.3 477.8L970 479L990.9 464.2L957.1 465.2Z" fill="#a4a29e"/>
<path d="M1093.2 445.3L1125.1 444.5L1125.4 429.7L1094.7 430.5Z" fill="#b2b9c6"/>
<path d="M923.1 466.1L957.1 465.2L964.1 448.8L931.5 449.6Z" fill="#b2b9c6"/>
<path d="M1156.9 443.6L1188.5 442.8L1186.4 428.1L1155.9 428.9Z" fill="#b2b9c6"/>
<path d="M1127.4 536L1155.7 541.9L1188.1 517.3L1157.4 513.7Z" fill="#b9b8b8"/>
<path d="M1125.1 444.5L1156.9 443.6L1155.9 428.9L1125.4 429.7Z" fill="#b2b9c6"/>
<path d="M1321.1 455.1L1353.3 454.2L1344.6 438.6L1313.7 439.5Z" fill="#b2b9c6"/>
<path d="M1179.6 660.7L1203.8 676.3L1250.4 649.4L1222.3 636.5Z" fill="#b9babf"/>
<path d="M1352.3 493.9L1385.4 495.2L1417.2 452.4L1385.3 453.3Z" fill="#c1c3c8"/>
<path d="M1068.2 503.4L1097.5 506.8L1126.1 485.1L1094.5 483.9Z" fill="#b2b0ae"/>
<path d="M1178.9 579.7L1206.9 588.6L1245 560.4L1214.5 554.1Z" fill="#bcbcbe"/>
<path d="M1155.7 541.9L1184.7 547.9L1219.2 520.9L1188.1 517.3Z" fill="#bbbabb"/>
<path d="M1195.5 624.2L1222.3 636.5L1265.8 607.4L1235.8 597.8Z" fill="#bbbcc0"/>
<path d="M970 479L1000.8 480.2L1024.6 463.3L990.9 464.2Z" fill="#a7a4a1"/>
<path d="M957.1 465.2L990.9 464.2L996.6 447.9L964.1 448.8Z" fill="#b2b9c6"/>
<path d="M1348.8 535.9L1382.5 539.8L1418.7 496.5L1385.4 495.2Z" fill="#c0c2c8"/>
<path d="M1097.5 506.8L1127.2 510.2L1157.8 486.4L1126.1 485.1Z" fill="#b6b4b2"/>
<path d="M1288.7 455.9L1321.1 455.1L1313.7 439.5L1282.6 440.3Z" fill="#b2b9c6"/>
<path d="M1319.4 492.6L1352.3 493.9L1385.3 453.3L1353.3 454.2Z" fill="#c1c2c7"/>
<path d="M1206.9 588.6L1235.8 597.8L1276.3 566.9L1245 560.4Z" fill="#bcbdc0"/>
<path d="M1184.7 547.9L1214.5 554.1L1250.8 524.6L1219.2 520.9Z" fill="#bdbcbe"/>
<path d="M1315.6 532.1L1348.8 535.9L1385.4 495.2L1352.3 493.9Z" fill="#c0c1c6"/>
<path d="M1127.2 510.2L1157.4 513.7L1189.8 487.6L1157.8 486.4Z" fill="#b9b7b7"/>
<path d="M990.9 464.2L1024.6 463.3L1028.9 447L996.6 447.9Z" fill="#b2b9c6"/>
<path d="M1000.8 480.2L1031.9 481.4L1058.2 462.3L1024.6 463.3Z" fill="#aaa8a4"/>
<path d="M1222.3 636.5L1250.4 649.4L1296.8 617.2L1265.8 607.4Z" fill="#bbbcc1"/>
<path d="M1214.5 554.1L1245 560.4L1283 528.3L1250.8 524.6Z" fill="#bebec1"/>
<path d="M1256.2 456.9L1288.7 455.9L1282.6 440.3L1251.4 441.1Z" fill="#b2b9c6"/>
<path d="M1235.8 597.8L1265.8 607.4L1308.5 573.6L1276.3 566.9Z" fill="#bdbec2"/>
<path d="M1283 528.3L1315.6 532.1L1352.3 493.9L1319.4 492.6Z" fill="#c0c1c5"/>
<path d="M1286.7 491.4L1319.4 492.6L1353.3 454.2L1321.1 455.1Z" fill="#c1c1c5"/>
<path d="M1245 560.4L1276.3 566.9L1315.6 532.1L1283 528.3Z" fill="#bebfc3"/>
<path d="M1157.4 513.7L1188.1 517.3L1221.9 488.8L1189.8 487.6Z" fill="#bbbabb"/>
<path d="M1308.5 573.6L1341.4 580.4L1382.5 539.8L1348.8 535.9Z" fill="#bfc0c5"/>
<path d="M1276.3 566.9L1308.5 573.6L1348.8 535.9L1315.6 532.1Z" fill="#bfc0c4"/>
<path d="M1250.8 524.6L1283 528.3L1319.4 492.6L1286.7 491.4Z" fill="#bfc0c3"/>
<path d="M1024.6 463.3L1058.2 462.3L1061.1 446.2L1028.9 447Z" fill="#b2b9c6"/>
<path d="M1188.1 517.3L1219.2 520.9L1254.2 490.1L1221.9 488.8Z" fill="#bdbcbe"/>
<path d="M1265.8 607.4L1296.8 617.2L1341.4 580.4L1308.5 573.6Z" fill="#bdbec3"/>
<path d="M1219.2 520.9L1250.8 524.6L1286.7 491.4L1254.2 490.1Z" fill="#bebec1"/>
<path d="M1031.9 481.4L1063.1 482.7L1091.6 461.4L1058.2 462.3Z" fill="#adaba8"/>
<path d="M1223.6 457.8L1256.2 456.9L1251.4 441.1L1220 441.9Z" fill="#b2b9c6"/>
<path d="M1254.2 490.1L1286.7 491.4L1321.1 455.1L1288.7 455.9Z" fill="#c0c0c3"/>
<path d="M1058.2 462.3L1091.6 461.4L1093.2 445.3L1061.1 446.2Z" fill="#b2b9c6"/>
<path d="M1190.8 458.7L1223.6 457.8L1220 441.9L1188.5 442.8Z" fill="#b2b9c6"/>
<path d="M1063.1 482.7L1094.5 483.9L1124.8 460.5L1091.6 461.4Z" fill="#b0afac"/>
<path d="M1091.6 461.4L1124.8 460.5L1125.1 444.5L1093.2 445.3Z" fill="#b2b9c6"/>
<path d="M1157.9 459.6L1190.8 458.7L1188.5 442.8L1156.9 443.6Z" fill="#b2b9c6"/>
<path d="M1124.8 460.5L1157.9 459.6L1156.9 443.6L1125.1 444.5Z" fill="#b2b9c6"/>
<path d="M1221.9 488.8L1254.2 490.1L1288.7 455.9L1256.2 456.9Z" fill="#bfbec0"/>
<path d="M1094.5 483.9L1126.1 485.1L1157.9 459.6L1124.8 460.5Z" fill="#b4b2b1"/>
<path d="M1189.8 487.6L1221.9 488.8L1256.2 456.9L1223.6 457.8Z" fill="#bdbcbd"/>
<path d="M1126.1 485.1L1157.8 486.4L1190.8 458.7L1157.9 459.6Z" fill="#b7b6b5"/>
<path d="M1157.8 486.4L1189.8 487.6L1223.6 457.8L1190.8 458.7Z" fill="#bab9b9"/>
</g>
<path d="M1006.9 301.7L939.2 434.4L932.2 446.2L908.7 476.6L901.4 484L900.2 488.9L904 492.2L915.7 495.9L944.2 509L967.6 524.1L989.9 544.3L991.5 548L1000.2 559.5L1009 578L1013.5 596.6L1014.2 614.3L1011.8 630.4L1007.3 644.1L1001.9 655L996.6 662.7L963.1 701.2L964.7 709.7L970.6 717.5L981.3 724L997.3 728.6L1018.8 730.6L1034.9 729.8L1276.3 825.6L1308.1 798.2L1337.3 767.2L1362.9 733.3L1384.4 697.2L1401.3 659.8L1413.6 621.9L1421.1 583.9L1424.1 546.5L1422.8 510.2L1420.4 494L1449 451.5L1324.7 296.4L1006.9 301.7Z" fill="none" stroke="#f9a030" stroke-width="1.5" stroke-linejoin="round"/>
  <path d="M1296 620.300 1577 855.400" stroke="#b03c58" stroke-width="1.700" fill="none"/>
  <g transform="translate(1177.300 521.300)"><path d="M0-16V16M-16.400 7 16 -6.500M-10.800-8.900 11.400 9.100" stroke="#1a1a1a" stroke-width="1" fill="none"/><circle r="9.800" fill="none" stroke="#f4f4f4" stroke-width="1.300"/><circle r="9.800" fill="none" stroke="#f0303a" stroke-width="1.300" stroke-dasharray="3.850 3.850"/><circle r="1.700" fill="#f39a28"/></g>
 </svg>
 <div class="a" style="left:0;top:0;width:799px;height:25px;background:#424242"></div>
 <!-- row 1 -->
 <div class="btn" style="left:8px;top:4px;width:30px;height:18px"></div>
 <svg style="left:11px;top:6px" width="16" height="14" viewBox="0 0 16 14"><circle cx="10.200" cy="3.800" r="3.300" fill="#e6e6e6"/><circle cx="9.200" cy="2.800" r="1" fill="#444"/><path d="M1 7.500h13M.500 10.500h14M4.500 5.500 3 13.500M11 7.500 12 13.500" stroke="#e6e6e6" stroke-width="1.100" fill="none"/></svg>
 <svg style="left:28.500px;top:11px" width="8" height="5"><use href="#chev"/></svg>
 <svg style="left:50px;top:1px" width="24" height="24"><use href="#tsel"/></svg>
 <div class="btn b" style="left:88px;top:4px;width:18.300px;height:18px;border-radius:3px 0 0 3px"></div>
 <div class="btn g" style="left:107px;top:4px;width:18.300px;height:18px;border-radius:0"></div>
 <div class="btn g" style="left:125.800px;top:4px;width:18.300px;height:18px;border-radius:0"></div>
 <div class="btn g" style="left:144.600px;top:4px;width:18.300px;height:18px;border-radius:0"></div>
 <div class="btn g" style="left:163.400px;top:4px;width:18.600px;height:18px;border-radius:0 3px 3px 0"></div>
 <svg style="left:89px;top:5px" width="16" height="16" viewBox="0 0 16 16"><rect x="1.300" y="1.300" width="13.400" height="13.400" rx="1" fill="none" stroke="#fff" stroke-width="1.300" stroke-dasharray="2.600 1.867" stroke-dashoffset="1.300"/></svg>
 <svg style="left:109px;top:6px" width="14" height="14" viewBox="0 0 14 14"><path d="M5 .500h8.500V9H9v4.500H.500V5H5z" fill="#d8d8d8"/></svg>
 <svg style="left:128px;top:6px" width="14" height="14" viewBox="0 0 14 14"><path d="M5 .500h8.500V9H9V5H5z" fill="#d8d8d8"/><path d="M4 5.500H1V13h7.500v-3" fill="none" stroke="#d8d8d8" stroke-width="1" stroke-dasharray="1.600 1.400"/></svg>
 <svg style="left:146.800px;top:6px" width="14" height="14" viewBox="0 0 14 14"><path d="M5 .500h8.500V9H9v4.500H.500V5H5z" fill="#d8d8d8"/><rect x="5" y="5" width="4" height="4" fill="#545454"/></svg>
 <svg style="left:165.600px;top:6px" width="14" height="14" viewBox="0 0 14 14"><rect x="1" y="1" width="12" height="12" fill="none" stroke="#d8d8d8" stroke-width="1.100" stroke-dasharray="2 1.700"/><rect x="4" y="4" width="6" height="6" fill="#d8d8d8"/></svg>
 <!-- transform orientation -->
 <div class="btn" style="left:274px;top:4px;width:78px;height:18px"></div>
 <svg style="left:277px;top:6px" width="16" height="14" viewBox="0 0 16 14"><path d="M3.500 1.500V11.500H14M3.500 11.500 10 4.500" fill="none" stroke="#e0e0e0" stroke-width="1.100"/><path d="M3.500 0 5.600 3H1.400zM15.500 11.500 12.500 13.600V9.400zM11 3.400 10.500 6.300 8.200 4.200z" fill="#e0e0e0"/></svg>
 <div class="t" style="left:299px;top:6px">Global</div>
 <svg style="left:342.500px;top:11px" width="8" height="5"><use href="#chev"/></svg>
 <!-- pivot -->
 <div class="btn" style="left:359px;top:4px;width:30px;height:18px"></div>
 <svg style="left:362px;top:5px" width="16" height="16" viewBox="0 0 16 16"><circle cx="9.500" cy="6" r="3.800" fill="none" stroke="#e0e0e0" stroke-width="1.200"/><circle cx="6" cy="10.500" r="3.800" fill="none" stroke="#e0e0e0" stroke-width="1.200"/><circle cx="7.800" cy="8.200" r="1.200" fill="#e0e0e0"/></svg>
 <svg style="left:379.500px;top:11px" width="8" height="5"><use href="#chev"/></svg>
 <!-- snap -->
 <div class="btn" style="left:395.500px;top:4px;width:19px;height:18px;border-radius:3px 0 0 3px;background:#4f4f4f"></div>
 <div class="btn" style="left:414.500px;top:4px;width:31.500px;height:18px;border-radius:0 3px 3px 0"></div>
 <svg style="left:398px;top:6px" width="14" height="14" viewBox="0 0 14 14"><path d="M2 6.500 6 2.500A4 4 0 0 1 12 8.500L8.500 12 6.500 10 10 6.500A1.200 1.200 0 0 0 8 4.500L4 8.500z" fill="none" stroke="#9a9a9a" stroke-width="1.100" stroke-linejoin="round"/></svg>
 <svg style="left:416px;top:5px" width="16" height="15" viewBox="0 0 16 15"><path d="M1.500 7v6M5.500 8.500v3M9.500 8.500v3M13.500 7v6M1.500 10h12" stroke="#e0e0e0" stroke-width="1.100" fill="none"/><rect x="11" y="1" width="3.600" height="3.600" fill="#e0e0e0"/></svg>
 <svg style="left:435.500px;top:11px" width="8" height="5"><use href="#chev"/></svg>
 <!-- proportional -->
 <div class="btn" style="left:452px;top:4px;width:19px;height:18px;border-radius:3px 0 0 3px;background:#4f4f4f"></div>
 <div class="btn" style="left:471px;top:4px;width:32px;height:18px;border-radius:0 3px 3px 0;background:#3a3a3a"></div>
 <svg style="left:454.500px;top:6px" width="14" height="14" viewBox="0 0 14 14"><circle cx="7" cy="7" r="5.800" fill="none" stroke="#8a8a8a" stroke-width="1.100"/><circle cx="7" cy="7" r="1.600" fill="#8a8a8a"/></svg>
 <svg style="left:474px;top:6px" width="16" height="14" viewBox="0 0 16 14"><path d="M1 12.500C5 12.500 5.500 1.500 8 1.500S11 12.500 15 12.500" fill="none" stroke="#9a9a9a" stroke-width="1.100"/></svg>
 <svg style="left:493.500px;top:11px;opacity:.35" width="8" height="5"><use href="#chev"/></svg>
 <!-- options -->
 <div class="btn" style="left:730px;top:4px;width:61px;height:18px"></div>
 <div class="t" style="left:736.500px;top:6px">Options</div>
 <svg style="left:781px;top:11px" width="8" height="5"><use href="#chev"/></svg>
 <!-- row 2 -->
 <div class="btn" style="left:9px;top:29px;width:108px;height:18px;background:rgba(34,34,34,.78)"></div>
 <svg style="left:12.500px;top:31px;fill:#e0e0e0;stroke:#e0e0e0" width="15" height="15"><use href="#iobj"/></svg>
 <div class="t" style="left:34.500px;top:31px;letter-spacing:-.6px">Object Mode</div>
 <svg style="left:107.500px;top:37px" width="8" height="5"><use href="#chev"/></svg>
 <div class="btn" style="left:124px;top:29px;width:37px;height:18px;background:rgba(34,34,34,.55)"></div><div class="t" style="left:130px;top:31px">View</div>
 <div class="btn" style="left:164.500px;top:29px;width:43px;height:18px;background:rgba(34,34,34,.55)"></div><div class="t" style="left:170.500px;top:31px">Select</div>
 <div class="btn" style="left:210.500px;top:29px;width:31.500px;height:18px;background:rgba(34,34,34,.55)"></div><div class="t" style="left:216px;top:31px">Add</div>
 <div class="btn" style="left:244.500px;top:29px;width:46px;height:18px;background:rgba(34,34,34,.55)"></div><div class="t" style="left:250px;top:31px">Object</div>
 <!-- right of row2 -->
 <div class="btn" style="left:544px;top:29px;width:30px;height:18px"></div>
 <svg style="left:546px;top:30.500px" width="18" height="16" viewBox="0 0 18 16"><path d="M5.500 5.200C7 2.800 8.800 1.800 11 1.800S15.500 3 17 5.200C15.500 7.600 13.200 8.600 11 8.600S7 7.600 5.500 5.200z" fill="none" stroke="#e0e0e0" stroke-width="1.200"/><circle cx="11" cy="5.200" r="2" fill="#e0e0e0"/><circle cx="11" cy="5.200" r=".8" fill="#282828"/><path d="M2 6.500 8.500 11 5.500 11.500 4.200 14.800z" fill="#e0e0e0" stroke="#282828" stroke-width=".5"/></svg>
 <svg style="left:564.500px;top:37px" width="8" height="5"><use href="#chev"/></svg>
 <div class="btn b" style="left:581px;top:29px;width:18.500px;height:18px;border-radius:3px 0 0 3px"></div>
 <div class="btn" style="left:600px;top:29px;width:18.500px;height:18px;border-radius:0 3px 3px 0"></div>
 <svg style="left:582.500px;top:31px" width="16" height="15" viewBox="0 0 16 15"><path d="M1.500 4.500C7.500 4.500 11.500 8.500 11.500 14" fill="none" stroke="#f0f0f0" stroke-width="1.100"/><path d="M4.800 10.800 13.500 2M9.500 1.800H13.800V6" stroke="#f0f0f0" stroke-width="1.100" fill="none"/><circle cx="3.500" cy="12" r="1.700" fill="none" stroke="#f0f0f0" stroke-width="1.100"/></svg>
 <svg style="left:605px;top:37px" width="8" height="5"><use href="#chev"/></svg>
 <div class="btn b" style="left:626px;top:29px;width:18.500px;height:18px;border-radius:3px 0 0 3px"></div>
 <div class="btn" style="left:645px;top:29px;width:18.500px;height:18px;border-radius:0 3px 3px 0"></div>
 <svg style="left:627.500px;top:30.500px" width="16" height="16"><use href="#iover"/></svg>
 <svg style="left:650px;top:37px" width="8" height="5"><use href="#chev"/></svg>
 <div class="btn" style="left:671px;top:29px;width:18px;height:18px;background:#444"></div>
 <svg style="left:673px;top:31.500px" width="14" height="14" viewBox="0 0 14 14"><path d="M4.500 3V1H13V9.500H11" fill="none" stroke="#7a7a7a" stroke-width="1"/><rect x="1" y="4" width="9" height="9" fill="none" stroke="#7a7a7a" stroke-width="1"/><path d="M4 8h.01M7 8h.01M5.500 11h.01" stroke="#7a7a7a" stroke-width="1.200" stroke-linecap="round"/></svg>
 <div class="btn g" style="left:696.500px;top:29px;width:18.300px;height:18px;border-radius:3px 0 0 3px"></div>
 <div class="btn g" style="left:715.300px;top:29px;width:18.300px;height:18px;border-radius:0"></div>
 <div class="btn b" style="left:734.100px;top:29px;width:18.300px;height:18px;border-radius:0"></div>
 <div class="btn g" style="left:752.900px;top:29px;width:18.600px;height:18px;border-radius:0"></div>
 <div class="btn" style="left:772px;top:29px;width:19px;height:18px;border-radius:0 3px 3px 0"></div>
 <svg style="left:698.500px;top:31.500px" width="14" height="14" viewBox="0 0 14 14"><circle cx="7" cy="7" r="6" fill="none" stroke="#e0e0e0" stroke-width="1"/><ellipse cx="7" cy="7" rx="2.800" ry="6" fill="none" stroke="#e0e0e0" stroke-width="1"/><path d="M1 7h12" stroke="#e0e0e0" stroke-width="1"/></svg>
 <svg style="left:717.300px;top:31.500px" width="14" height="14" viewBox="0 0 14 14"><circle cx="7" cy="7" r="6.300" fill="#dcdcdc"/></svg>
 <svg style="left:736.100px;top:31.500px" width="14" height="14" viewBox="0 0 14 14"><circle cx="7" cy="7" r="6" fill="none" stroke="#f4f4f4" stroke-width="1"/><path d="M7 1A6 6 0 0 1 13 7H7zM7 7v6A6 6 0 0 1 1.800 10z" fill="#f4f4f4"/></svg>
 <svg style="left:755px;top:31.500px" width="14" height="14" viewBox="0 0 14 14"><circle cx="7" cy="7" r="6" fill="none" stroke="#e0e0e0" stroke-width="1"/><circle cx="7" cy="7" r="4.200" fill="#8a8a8a"/><path d="M3.500 5A4 4 0 0 1 7 3" stroke="#f4f4f4" stroke-width="1.200" fill="none"/></svg>
 <svg style="left:777.500px;top:37px" width="8" height="5"><use href="#chev"/></svg>
 <!-- toolbar -->
 <div class="tool b" style="left:8px;top:60px;width:40px;height:33.500px;border-radius:4px 4px 0 0;background:#5680c2"></div>
 <div class="tool" style="left:8px;top:93.500px;width:40px;height:35px;border-radius:0 0 4px 4px;background:rgba(44,44,44,.92)"></div>
 <div class="tool" style="left:8px;top:135px;width:40px;height:139px;border-radius:4px;background-color:rgba(44,44,44,.92);background-image:linear-gradient(#272727,#272727),linear-gradient(#272727,#272727),linear-gradient(#272727,#272727);background-size:100% 1px;background-repeat:no-repeat;background-position:0 33.500px,0 68.500px,0 103.500px"></div>
 <div class="tool" style="left:8px;top:280px;width:40px;height:69px;border-radius:4px;background-color:rgba(44,44,44,.92);background-image:linear-gradient(#272727,#272727);background-size:100% 1px;background-repeat:no-repeat;background-position:0 34px"></div>
 <div class="tool" style="left:8px;top:355px;width:40px;height:34.500px;border-radius:4px;background:rgba(44,44,44,.92)"></div>
 <svg style="left:16px;top:64.800px" width="24" height="24"><use href="#tsel"/></svg>
 <svg style="left:43px;top:88.500px" width="4" height="4"><use href="#corner"/></svg>
 <svg style="left:15px;top:98.500px" width="25" height="25"><use href="#tcur"/></svg>
 <svg style="left:15.500px;top:140px" width="24" height="24"><use href="#tmove"/></svg>
 <svg style="left:15px;top:174px" width="25" height="25"><use href="#trot"/></svg>
 <svg style="left:15.500px;top:209.500px" width="24" height="24"><use href="#tscl"/></svg>
 <svg style="left:43px;top:233.500px" width="4" height="4"><use href="#corner"/></svg>
 <svg style="left:15.500px;top:244.500px" width="24" height="24"><use href="#ttrf"/></svg>
 <svg style="left:13px;top:284.500px" width="30" height="26"><use href="#tann"/></svg>
 <svg style="left:43px;top:308.500px" width="4" height="4"><use href="#corner"/></svg>
 <svg style="left:16px;top:319px" width="24" height="24"><use href="#tmeas"/></svg>
 <svg style="left:11px;top:358px" width="30" height="30"><use href="#tadd"/></svg>
 <svg style="left:43px;top:384px" width="4" height="4"><use href="#corner"/></svg>
 <!-- text overlay -->
 <div class="t" style="left:66px;top:60px;color:#f0f0f0;text-shadow:0 0 2px #000,0 1px 1px #000">User Perspective</div>
 <div class="t" style="left:66px;top:78px;color:#f0f0f0;text-shadow:0 0 2px #000,0 1px 1px #000">(0) Collection | target</div>
 <!-- gizmo -->
 <svg style="left:700px;top:58px" width="90" height="90" viewBox="1478 82 90 90">
  <circle cx="1508.900" cy="109.600" r="5.800" fill="#8a3346"/>
  <circle cx="1527.600" cy="151.500" r="5.800" fill="#2c5a96"/>
  <path d="M1527.300 125.200 1553.600 114.200" stroke="#648c1e" stroke-width="2.200"/>
  <path d="M1527.300 125.200 1526.600 98.600" stroke="#2f86eb" stroke-width="2.200"/>
  <path d="M1527.300 125.200 1545.300 140.300" stroke="#ff3352" stroke-width="2.200"/>
  <circle cx="1500" cy="135.900" r="6.300" fill="#8cd612"/>
  <circle cx="1553.600" cy="114.200" r="7.700" fill="#648c1e"/>
  <circle cx="1526.600" cy="98.600" r="7.700" fill="#2f86eb"/>
  <circle cx="1545.300" cy="140.300" r="7.700" fill="#ff3352"/>
  <g font-family="DejaVu Sans,Liberation Sans,sans-serif" font-size="11" fill="#111" text-anchor="middle" letter-spacing="0"><text x="1526.600" y="102.600">Z</text><text x="1553.600" y="118.200">Y</text><text x="1545.300" y="144.300">X</text></g>
 </svg>
 <div class="a" style="left:762.500px;top:142px;width:27px;height:27px;border-radius:14px;background:#333"></div>
 <div class="a" style="left:762.500px;top:172.500px;width:27px;height:27px;border-radius:14px;background:#333"></div>
 <div class="a" style="left:762.500px;top:203.500px;width:27px;height:27px;border-radius:14px;background:#333"></div>
 <div class="a" style="left:762.500px;top:234px;width:27px;height:27px;border-radius:14px;background:#333"></div>
 <svg style="left:766px;top:145.500px" width="20" height="20"><use href="#gzoom"/></svg>
 <svg style="left:766.500px;top:176px" width="20" height="20"><use href="#ghand"/></svg>
 <svg style="left:767px;top:209px;fill:#e6e6e6" width="18" height="16"><use href="#icam"/></svg>
 <svg style="left:768px;top:239px" width="16" height="16" viewBox="0 0 16 16"><path d="M4 1.500H12L15 14.500H1z" fill="#e6e6e6"/><path d="M6.700 1.500 5.700 14.500M9.300 1.500 10.300 14.500M3.200 5.200H12.800M2.300 9.200H13.700" stroke="#333" stroke-width="1.100" fill="none"/></svg>
 <div class="a" style="left:791px;top:63px;width:8px;height:19px;border-radius:4px 0 0 4px;background:#333"></div>
 <svg style="left:792.500px;top:68.500px" width="5" height="8" viewBox="0 0 5 8"><path d="M4.200.800 1 4 4.200 7.200" fill="none" stroke="#b0b0b0" stroke-width="1.100"/></svg>
</div>
<!-- OUTLINER -->
<div class="area" style="left:1580px;top:24px;width:325px;height:170px;background:#282828;border-radius:5px 0 0 5px">
 <div class="a" style="left:0;top:46px;width:325px;height:20px;background:#2b2b2b"></div>
 <div class="a" style="left:0;top:86px;width:325px;height:20px;background:#2b2b2b"></div>
 <div class="a" style="left:0;top:126px;width:325px;height:20px;background:#2b2b2b"></div>
 <div class="a" style="left:0;top:166px;width:325px;height:20px;background:#2b2b2b"></div>
 <div class="a" style="left:0;top:106px;width:325px;height:20px;background:#3f5a91"></div>
 <div class="a" style="left:0;top:0;width:325px;height:25px;background:#3a3a3a"></div>
 <!-- header -->
 <div class="btn" style="left:9px;top:3px;width:30px;height:18px"></div>
 <svg style="left:12px;top:5px" width="15" height="14" viewBox="0 0 15 14"><path d="M1 1h4.500v3H1zM6 6h8v3H6zM6 10.500h8v3H6z" fill="#e0e0e0"/><path d="M2.500 4v8H6M2.500 7.500H6" fill="none" stroke="#e0e0e0" stroke-width="1"/></svg>
 <svg style="left:29px;top:10px" width="8" height="5"><use href="#chev"/></svg>
 <div class="btn" style="left:46px;top:3px;width:30px;height:18px"></div>
 <svg style="left:49.500px;top:5px" width="14" height="14"><use href="#iimgs"/></svg>
 <svg style="left:66px;top:10px" width="8" height="5"><use href="#chev"/></svg>
 <div class="btn k" style="left:99.500px;top:3px;width:110px;height:18px;border-radius:4px"></div>
 <svg style="left:103px;top:4px" width="16" height="16"><use href="#isearch"/></svg>
 <div class="btn" style="left:268px;top:3px;width:30px;height:18px"></div>
 <svg style="left:272px;top:5px" width="13" height="14" viewBox="0 0 13 14"><path d="M1 1h11L7.800 6.500V12L5.200 13.500V6.500z" fill="none" stroke="#e0e0e0" stroke-width="1.100" stroke-linejoin="round"/></svg>
 <svg style="left:288px;top:10px" width="8" height="5"><use href="#chev"/></svg>
 <div class="btn g" style="left:305px;top:3px;width:25px;height:18px;background:#4a4a4a"></div>
 <svg style="left:308px;top:4px" width="17" height="16" viewBox="0 0 17 16"><path d="M1.500 4.500h8v2.500h-8zM2.500 7.500h6.500V13H2.500z" fill="none" stroke="#d0d0d0" stroke-width="1"/><circle cx="12.500" cy="4" r="3.300" fill="none" stroke="#d0d0d0" stroke-width="1"/><path d="M12.500 2.200v3.600M10.700 4h3.600" stroke="#d0d0d0" stroke-width="1"/></svg>
 <!-- rows -->
 <svg style="left:22.500px;top:29px" width="16" height="16"><use href="#ibox"/></svg>
 <div class="t" style="left:44px;top:30px">Scene Collection</div>
 <div class="tri" style="left:27px;top:54px;border-left:3.500px solid transparent;border-right:3.500px solid transparent;border-top:6px solid #c8c8c8"></div>
 <div class="a" style="left:40.500px;top:47.500px;width:19px;height:18px;border-radius:4px;background:#464646;border:1px solid #5a5a5a"></div>
 <svg style="left:42px;top:49px" width="16" height="16"><use href="#ibox"/></svg>
 <div class="t" style="left:64.500px;top:50px">Collection</div>
 <div class="a" style="left:289px;top:51.500px;width:10px;height:10px;border-radius:2px;background:#e6e6e6"></div>
 <svg style="left:289.500px;top:52.500px" width="9" height="8" viewBox="0 0 9 8"><path d="M1 4 3.500 6.500 8 1.200" fill="none" stroke="#222" stroke-width="1.500"/></svg>
 <svg style="left:307px;top:50.500px" width="16" height="12"><use href="#ieye"/></svg>
 <div class="a" style="left:29px;top:71px;width:1px;height:70px;background:#505050"></div>
 <!-- left -->
 <div class="tri" style="left:48px;top:72.500px;border-top:3.500px solid transparent;border-bottom:3.500px solid transparent;border-left:6px solid #909090"></div>
 <svg style="left:61.500px;top:68.500px;fill:#c07c48" width="17" height="15"><use href="#icam"/></svg>
 <div class="t" style="left:84.500px;top:70px;color:#9a9a9a">left</div>
 <svg style="left:121px;top:68px;fill:none;stroke:#2a9d7f;stroke-width:1.100" width="18" height="16" viewBox="0 0 18 16"><path d="M2.500 8C1 7 1 3.500 4 3S6.500 5 8 4.500 9.500 1.500 12.500 1.500 16.500 4 15 6.500 13.500 8 13.500 8"/><circle cx="11.800" cy="4.500" r="1.300"/><path d="M3.500 9h9.500v5H3.500zM13 10.500 16 9v5l-3-1.500M1.500 10.500H3.500v2H1.500z"/></svg>
 <svg style="left:307px;top:70.500px" width="16" height="12"><use href="#ieye"/></svg>
 <!-- left.001 -->
 <div class="tri" style="left:48px;top:92.500px;border-top:3.500px solid transparent;border-bottom:3.500px solid transparent;border-left:6px solid #909090"></div>
 <svg style="left:61.500px;top:88.500px;fill:#c07c48" width="17" height="15"><use href="#icam"/></svg>
 <div class="t" style="left:84.500px;top:90px;color:#9a9a9a">left.001</div>
 <svg style="left:145px;top:88px;fill:none;stroke:#2a9d7f;stroke-width:1.100" width="18" height="16" viewBox="0 0 18 16"><path d="M2.500 8C1 7 1 3.500 4 3S6.500 5 8 4.500 9.500 1.500 12.500 1.500 16.500 4 15 6.500 13.500 8 13.500 8"/><circle cx="11.800" cy="4.500" r="1.300"/><path d="M3.500 9h9.500v5H3.500zM13 10.500 16 9v5l-3-1.500M1.500 10.500H3.500v2H1.500z"/></svg>
 <svg style="left:307px;top:90.500px" width="16" height="12"><use href="#ieye"/></svg>
 <!-- target -->
 <div class="tri" style="left:48px;top:112.500px;border-top:3.500px solid transparent;border-bottom:3.500px solid transparent;border-left:6px solid #d8d8d8"></div>
 <div class="a" style="left:60.500px;top:107px;width:19px;height:18px;border-radius:4px;background:#6c80a6;border:1px solid #8093b5"></div>
 <svg style="left:62.500px;top:109px" width="15" height="15" viewBox="0 0 15 15"><path d="M1.500 1.500h12L7.500 13.500z" fill="none" stroke="#f0a25c" stroke-width="2.600" stroke-linejoin="round"/></svg>
 <div class="t" style="left:84.500px;top:110px;color:#f5a93a;letter-spacing:-.62px">target</div>
 <svg style="left:136px;top:108.500px;stroke:#22d9c2" width="15" height="15"><use href="#imesh"/></svg>
 <svg style="left:307px;top:110.500px" width="16" height="12"><use href="#ieye"/></svg>
 <!-- target_OuterCage -->
 <div class="tri" style="left:48px;top:132.500px;border-top:3.500px solid transparent;border-bottom:3.500px solid transparent;border-left:6px solid #909090"></div>
 <svg style="left:62.500px;top:129px" width="15" height="15" viewBox="0 0 15 15"><path d="M1.500 1.500h12L7.500 13.500z" fill="none" stroke="#a86c3e" stroke-width="2.600" stroke-linejoin="round"/></svg>
 <div class="t" style="left:84.500px;top:130px;color:#9a9a9a;letter-spacing:-.68px">target_OuterCage</div>
 <svg style="left:194.500px;top:128.500px;stroke:#21a07f" width="15" height="15"><use href="#imesh"/></svg>
 <svg style="left:307px;top:132px" width="16" height="8" viewBox="0 0 16 8"><path d="M1.500 1.500C4 5 12 5 14.500 1.500" fill="none" stroke="#b0b0b0" stroke-width="1.200"/></svg>
</div>
<!-- PROPERTIES -->
<div class="area" style="left:1580px;top:197px;width:325px;height:800px;background:#454545;border-radius:5px 0 0 0">
 <div class="a" style="left:0;top:0;width:325px;height:25px;background:#3a3a3a"></div>
 <div class="a" style="left:0;top:25px;width:28px;height:775px;background:#232323"></div>
 <!-- header -->
 <div class="btn" style="left:9px;top:2.500px;width:30px;height:18.500px"></div>
 <svg style="left:12.500px;top:5px" width="15" height="14" viewBox="0 0 15 14"><rect x=".600" y=".600" width="13.800" height="5.600" rx="2.800" fill="#e6e6e6"/><rect x=".600" y="7.800" width="13.800" height="5.600" rx="2.800" fill="#e6e6e6"/><rect x="7" y="1.800" width="6.200" height="3.200" rx="1.600" fill="#282828"/><rect x="9" y="9" width="4.200" height="3.200" rx="1.600" fill="#282828"/></svg>
 <svg style="left:29.500px;top:10px" width="8" height="5"><use href="#chev"/></svg>
 <div class="btn k" style="left:111.500px;top:2.500px;width:110px;height:18.500px;border-radius:4px"></div>
 <svg style="left:115px;top:4px" width="16" height="16"><use href="#isearch"/></svg>
 <div class="btn" style="left:305px;top:2.500px;width:25px;height:18.500px"></div>
 <svg style="left:310.500px;top:10px" width="8" height="5"><use href="#chev"/></svg>
 <!-- tabs -->
 <div class="a tb" style="top:34px"></div>
 <div class="a tb" style="top:70px"></div><div class="a tb" style="top:98px"></div><div class="a tb" style="top:126px"></div><div class="a tb" style="top:154px"></div><div class="a tb" style="top:182px"></div>
 <div class="a tb" style="top:218px"></div><div class="a tb" style="top:246px"></div><div class="a tb" style="top:274px"></div><div class="a tb" style="top:302px"></div><div class="a tb" style="top:330px"></div>
 <div class="a tb" style="top:358px;background:#454545;height:26px"></div><div class="a tb" style="top:386px"></div>
 <div class="a tb" style="top:422px"></div>
 <style>.tb{left:2px;width:26px;height:26px;background:#2b2b2b;border-radius:4px 0 0 4px}</style>
 <!-- tab icons (center x=15) -->
 <svg style="left:7px;top:39px" width="16" height="16" viewBox="0 0 16 16"><path d="M3.700 .800v7" stroke="#e0e0e0" stroke-width="1.300"/><path d="M1.700 9.200h4v3.300c0 2.600-4 2.600-4 0z" fill="#e0e0e0"/><path d="M11.800 7.500V14.200" stroke="#e0e0e0" stroke-width="2.500" stroke-linecap="round"/><path d="M9.200 1.300V4.500c0 3.400 5.200 3.400 5.200 0V1.300" fill="none" stroke="#e0e0e0" stroke-width="2.100"/></svg>
 <svg style="left:7px;top:75px" width="16" height="16" viewBox="0 0 16 16"><path d="M1.500 5.500h13v8.500h-13z" fill="none" stroke="#e0e0e0" stroke-width="1.300"/><path d="M4 5V3.200h5V5" fill="none" stroke="#e0e0e0" stroke-width="1.200"/><path d="M3.500 8h6M3.500 10h6M3.500 12h6" stroke="#e0e0e0" stroke-width=".9"/><rect x="11" y="7.500" width="2" height="4.500" fill="#e0e0e0"/></svg>
 <svg style="left:7px;top:103px" width="16" height="16" viewBox="0 0 16 16"><path d="M1 2.500c0-1 1-1.500 2-1.500h10c1 0 2 .5 2 1.500V6H1z" fill="#e0e0e0"/><rect x="3.500" y="7" width="9" height="8" fill="none" stroke="#e0e0e0" stroke-width="1.100"/><path d="M4.500 14 7.500 10 9 12 10 11 11.500 14z" fill="#e0e0e0"/></svg>
 <svg style="left:7px;top:131px" width="16" height="16"><use href="#iimgs"/></svg>
 <svg style="left:7px;top:159px" width="16" height="16" viewBox="0 0 16 16"><path d="M4.800 .800 8.600 11H1z" fill="#e0e0e0"/><circle cx="13" cy="3.200" r="1.900" fill="#e0e0e0"/><circle cx="10.800" cy="11.400" r="3.500" fill="#2b2b2b" stroke="#e0e0e0" stroke-width="1.300"/><circle cx="9.900" cy="10.400" r="1.100" fill="#e0e0e0"/></svg>
 <svg style="left:7px;top:187px" width="16" height="16" viewBox="0 0 16 16"><circle cx="8" cy="8" r="5.300" fill="#e0707a"/><path d="M4.800 4.600c1.600-.9 3.200 0 2.600 1.300-.5 1-2 .7-2.400 1.900-.3 1 1 1.500 1.900 1.900.9.500.4 1.900 1.300 2.300M10 3.600c.2 1 1.400 1.100 2.200 1.900" stroke="#2b2b2b" stroke-width="1.300" fill="none" stroke-linecap="round"/><path d="M14.300 1.700 12.200 3.800M3.800 12.200 1.700 14.300" stroke="#e0707a" stroke-width="1.200"/><path d="M2.600 4A6.900 6.900 0 0 0 4 13.400M13.400 12A6.900 6.900 0 0 0 12 2.600" fill="none" stroke="#e0707a" stroke-width="1"/></svg>
 <svg style="left:7px;top:223px;fill:#e8985a;stroke:#e8985a" width="16" height="16"><use href="#iobj"/></svg>
 <svg style="left:7px;top:251px" width="16" height="16" viewBox="0 0 16 16"><path d="M2.500 13.500 9 7" stroke="#6aa0e6" stroke-width="3" stroke-linecap="round"/><path d="M13.500 2.500 11 5l.500 1.500L13 7l2-2c.300 2.500-2 5-4.500 4L8.500 7.500C7 5 9.500 1.500 13.500 2.500z" fill="#6aa0e6"/></svg>
 <svg style="left:7px;top:279px" width="16" height="16" viewBox="0 0 16 16"><circle cx="3.500" cy="3.500" r="2.500" fill="#6aa0e6"/><path d="M3.500 3.500H13M3.500 3.500V13M3.500 3.500 12.500 12.500" stroke="#6aa0e6" stroke-width="1.100"/><circle cx="13" cy="3.500" r="1.500" fill="#6aa0e6"/><circle cx="3.500" cy="13" r="1.500" fill="#6aa0e6"/><circle cx="12.500" cy="12.500" r="1.800" fill="#6aa0e6"/></svg>
 <svg style="left:7px;top:307px" width="16" height="16" viewBox="0 0 16 16"><circle cx="7.500" cy="8.500" r="2.800" fill="#6aa0e6"/><path d="M13.500 8.500A6 6 0 1 1 9.500 2.800" fill="none" stroke="#6aa0e6" stroke-width="1.200"/><circle cx="13" cy="3" r="1.800" fill="#6aa0e6"/></svg>
 <svg style="left:7px;top:335px" width="16" height="16" viewBox="0 0 16 16"><path d="M1.500 10.500C1.500 7 10 1 13 1.500S14 5 11 11 1.500 14 1.500 10.500z" fill="none" stroke="#6aa0e6" stroke-width="1.200"/><circle cx="6" cy="10" r="2.800" fill="none" stroke="#6aa0e6" stroke-width="1.200"/><circle cx="6" cy="10" r=".900" fill="#6aa0e6"/></svg>
 <svg style="left:7px;top:363px;stroke:#22d9a8" width="16" height="16"><use href="#imesh"/></svg>
 <svg style="left:7px;top:391px" width="16" height="16" viewBox="0 0 16 16"><circle cx="8" cy="8" r="6.500" fill="#e0707a"/><path d="M8 1.500A6.500 6.500 0 0 1 14.500 8H8zM8 8v6.500A6.500 6.500 0 0 1 2.400 11.300z" fill="#232323" opacity=".85"/></svg>
 <svg style="left:7px;top:427px" width="16" height="16" viewBox="0 0 16 16"><rect x="1" y="1" width="14" height="14" fill="#e0707a"/><path d="M1 1h3.500v3.500H1zM8 1h3.500v3.500H8zM4.500 4.500H8V8H4.500zM11.500 4.500H15V8h-3.500zM1 8h3.500v3.500H1zM8 8h3.500v3.500H8zM4.500 11.500H8V15H4.500zM11.500 11.500H15V15h-3.500z" fill="#2b2b2b"/></svg>
 <!-- breadcrumb -->
 <svg style="left:38.500px;top:35.500px;fill:#e0e0e0;stroke:#e0e0e0" width="15" height="15"><use href="#iobj"/></svg>
 <div class="t" style="left:62px;top:36px">target</div>
 <svg style="left:104px;top:39.500px" width="5" height="8" viewBox="0 0 5 8"><path d="M1 1 4 4 1 7" fill="none" stroke="#6e6e6e" stroke-width="1.200"/></svg>
 <svg style="left:123.500px;top:35.500px;stroke:#e0e0e0" width="15" height="15"><use href="#imesh"/></svg>
 <div class="t" style="left:147px;top:36px">Mesh.006</div>
 <svg style="left:306px;top:35px;stroke:#8a8a8a" width="16" height="16"><use href="#ipin"/></svg>
 <!-- datablock -->
 <div class="btn" style="left:37px;top:70px;width:30.500px;height:18px;border-radius:3px 0 0 3px"></div>
 <div class="btn k" style="left:67.500px;top:70px;width:235.500px;height:18px;border-radius:0"></div>
 <div class="btn g" style="left:303.500px;top:70px;width:25px;height:18px;border-radius:0"></div>
 <svg style="left:40px;top:72px;stroke:#e0e0e0" width="14" height="14"><use href="#imesh"/></svg>
 <svg style="left:56.500px;top:77px" width="8" height="5"><use href="#chev"/></svg>
 <div class="t" style="left:75px;top:72px">Mesh.006</div>
 <svg style="left:306px;top:71.500px" width="14" height="15" viewBox="0 0 14 15"><path d="M7 1C5 2.500 3 3 1 3V8c0 3 3 5 6 6.500C10 13 13 11 13 8V3C11 3 9 2.500 7 1z" fill="none" stroke="#a8a8a8" stroke-width="1.100"/></svg>
 <!-- Vertex Groups panel -->
 <div class="a" style="left:28px;top:97px;width:297px;height:120px;background:#3d3d3d"></div>
 <div class="a" style="left:28px;top:97px;width:297px;height:23.500px;background:#4a4a4a"></div>
 <div class="tri" style="left:38px;top:106px;border-left:3.500px solid transparent;border-right:3.500px solid transparent;border-top:6px solid #b8b8b8"></div>
 <div class="pt" style="left:50px;top:101px">Vertex Groups</div>
 <div class="grip" style="left:313.500px;top:107px"></div>
 <div class="a" style="left:35.500px;top:130px;width:260px;height:78.500px;background:#2d2d2d;border:1px solid #373737;border-radius:4px"></div>
 <div class="tri" style="left:48px;top:195px;border-top:3px solid transparent;border-bottom:3px solid transparent;border-left:6px solid #c8c8c8"></div>
 <div class="a" style="left:170px;top:196.500px;width:11px;height:5px;background:radial-gradient(circle,#c0c0c0 .7px,transparent .9px) 0 0/3px 3px"></div>
 <div class="btn g" style="left:305px;top:130px;width:25px;height:18px;border-radius:3px 3px 0 0"></div>
 <div class="btn" style="left:305px;top:149px;width:25px;height:19px;border-radius:0 0 3px 3px;background:#4c4c4c"></div>
 <div class="btn" style="left:305px;top:176px;width:25px;height:18.500px"></div>
 <svg style="left:309px;top:134.500px" width="10" height="10" viewBox="0 0 10 10"><path d="M5 .500v9M.500 5h9" stroke="#e6e6e6" stroke-width="1.100" fill="none"/></svg>
 <svg style="left:309px;top:153.500px" width="10" height="10" viewBox="0 0 10 10"><path d="M.500 5h9" stroke="#7a7a7a" stroke-width="1.100" fill="none"/></svg>
 <svg style="left:310px;top:183px" width="8" height="5"><use href="#chev"/></svg>
 <!-- Shape Keys panel -->
 <div class="a" style="left:28px;top:217px;width:297px;height:120px;background:#3d3d3d"></div>
 <div class="a" style="left:28px;top:217px;width:297px;height:24px;background:#4a4a4a"></div>
 <div class="tri" style="left:38px;top:226px;border-left:3.500px solid transparent;border-right:3.500px solid transparent;border-top:6px solid #b8b8b8"></div>
 <div class="pt" style="left:50px;top:221px">Shape Keys</div>
 <div class="grip" style="left:313.500px;top:227px"></div>
 <div class="a" style="left:35.500px;top:250px;width:260px;height:78.500px;background:#2d2d2d;border:1px solid #373737;border-radius:4px"></div>
 <div class="tri" style="left:48px;top:315px;border-top:3px solid transparent;border-bottom:3px solid transparent;border-left:6px solid #c8c8c8"></div>
 <div class="a" style="left:170px;top:316.500px;width:11px;height:5px;background:radial-gradient(circle,#c0c0c0 .7px,transparent .9px) 0 0/3px 3px"></div>
 <div class="btn g" style="left:305px;top:250px;width:25px;height:18px;border-radius:3px 3px 0 0"></div>
 <div class="btn" style="left:305px;top:269px;width:25px;height:19px;border-radius:0 0 3px 3px;background:#4c4c4c"></div>
 <div class="btn" style="left:305px;top:296px;width:25px;height:18.500px"></div>
 <svg style="left:309px;top:254.500px" width="10" height="10" viewBox="0 0 10 10"><path d="M5 .500v9M.500 5h9" stroke="#e6e6e6" stroke-width="1.100" fill="none"/></svg>
 <svg style="left:309px;top:273.500px" width="10" height="10" viewBox="0 0 10 10"><path d="M.500 5h9" stroke="#7a7a7a" stroke-width="1.100" fill="none"/></svg>
 <svg style="left:310px;top:303px" width="8" height="5"><use href="#chev"/></svg>
 <!-- collapsed panels -->
 <div class="tri cp" style="top:346px"></div><div class="pt" style="left:50px;top:340.500px">UV Maps</div><div class="grip" style="left:313.500px;top:347px"></div>
 <div class="tri cp" style="top:370px"></div><div class="pt" style="left:50px;top:364.500px">Vertex Colors</div><div class="grip" style="left:313.500px;top:371px"></div>
 <div class="tri cp" style="top:394px"></div><div class="pt" style="left:50px;top:388.500px">Face Maps</div><div class="grip" style="left:313.500px;top:395px"></div>
 <div class="tri cp" style="top:418px"></div><div class="pt" style="left:50px;top:412.500px">Normals</div><div class="grip" style="left:313.500px;top:419px"></div>
 <div class="tri cp" style="top:442px"></div><div class="pt" style="left:50px;top:436.500px">Texture Space</div><div class="grip" style="left:313.500px;top:443px"></div>
 <div class="tri cp" style="top:466px"></div><div class="pt" style="left:50px;top:460.500px">Remesh</div><div class="grip" style="left:313.500px;top:467px"></div>
 <div class="tri cp" style="top:490px"></div><div class="pt" style="left:50px;top:484.500px">Geometry Data</div><div class="grip" style="left:313.500px;top:491px"></div>
 <div class="tri cp" style="top:514px"></div><div class="pt" style="left:50px;top:508.500px">Custom Properties</div><div class="grip" style="left:313.500px;top:515px"></div>
 <style>.cp{left:38px;border-top:3.500px solid transparent;border-bottom:3.500px solid transparent;border-left:6px solid #b0b0b0}</style>
</div>

</body>
</html>
